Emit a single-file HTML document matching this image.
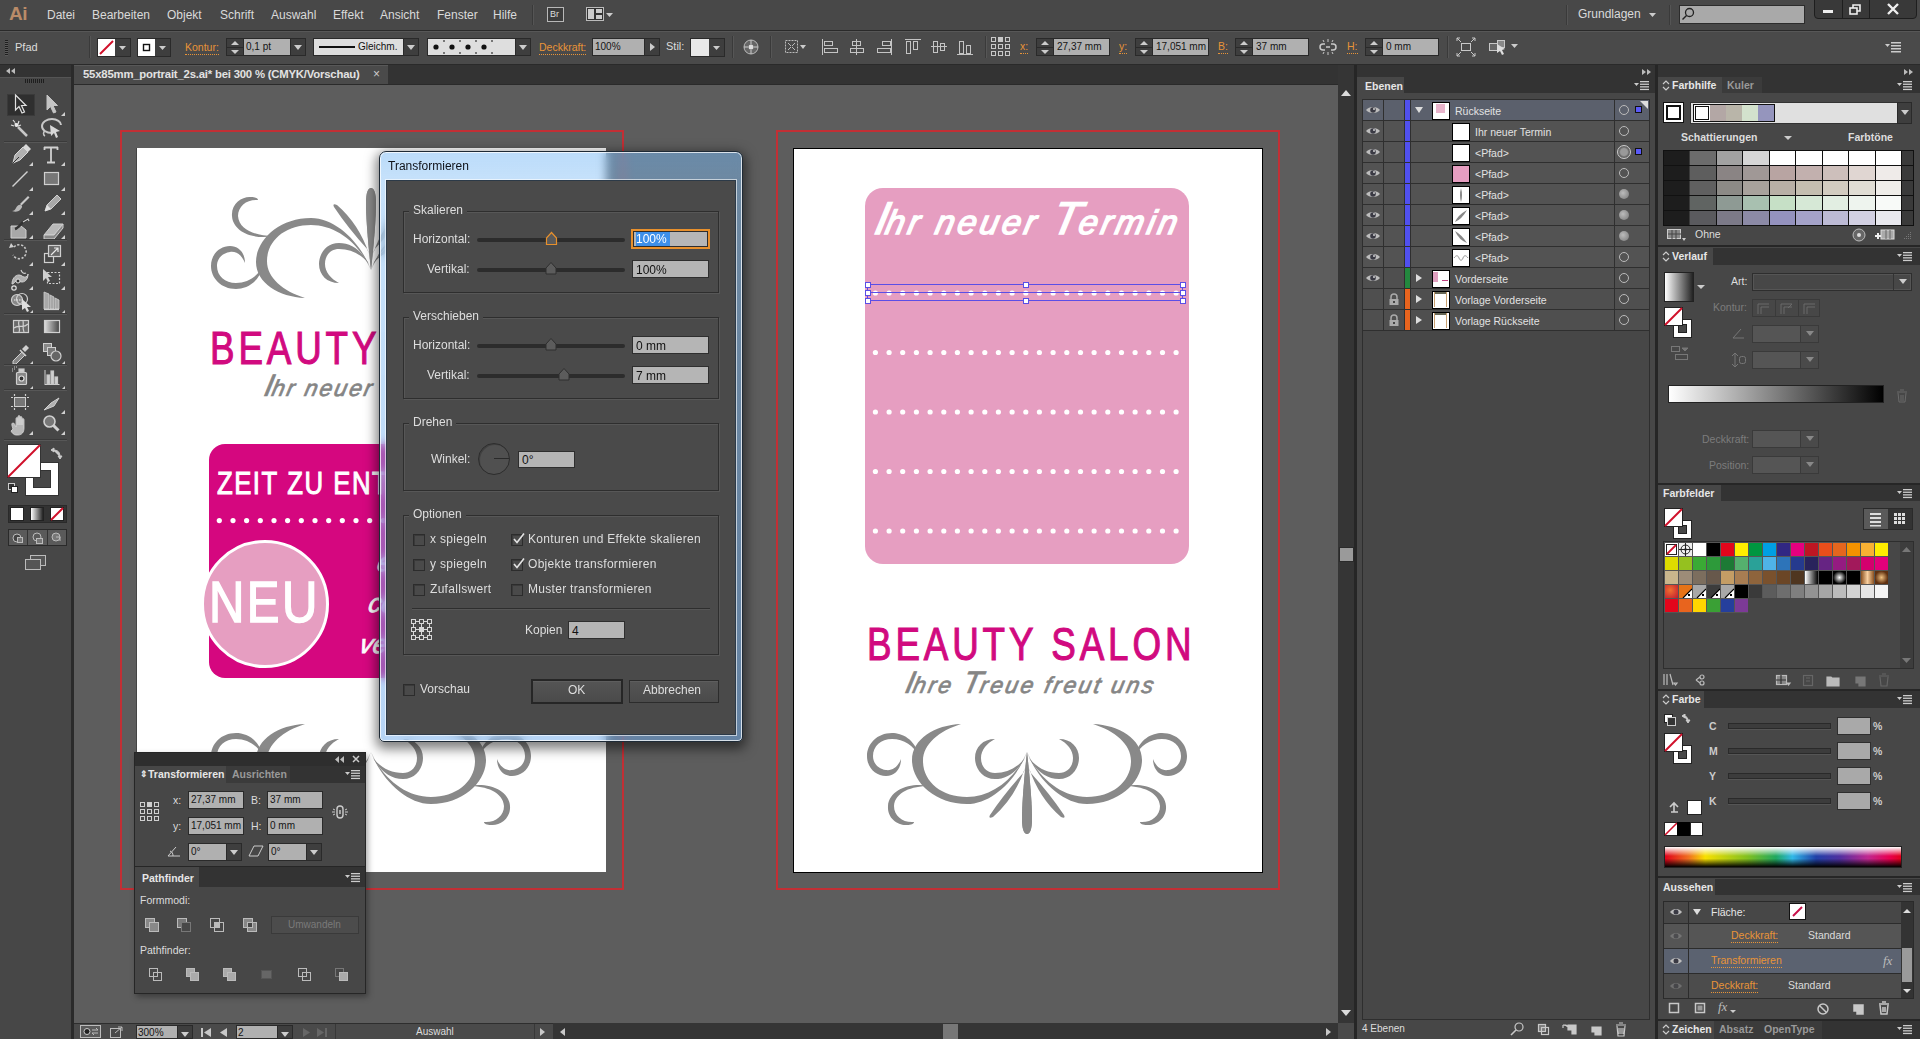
<!DOCTYPE html>
<html><head><meta charset="utf-8">
<style>
*{box-sizing:border-box;margin:0;padding:0}
html,body{width:1920px;height:1039px;overflow:hidden;background:#474747;font-family:"Liberation Sans",sans-serif;color:#d8d8d8;font-size:11px}
.a{position:absolute}
.t{position:absolute;white-space:nowrap;line-height:1}
.dl{font-size:12px;color:#dedede}
.trk{left:477px;width:148px;height:4px;background:#2c2c2c;border-radius:2px}
.inp{background:#b5b5b5;border:1px solid #2e2e2e}
.cb{width:12px;height:12px;background:#4a4a4a;border:1px solid #2c2c2c;box-shadow:inset 1px 1px 0 #3a3a3a}
.btn{background:linear-gradient(#555,#4a4a4a);border:1px solid #2c2c2c;box-shadow:inset 0 1px 0 #5e5e5e}
.mn{top:9px;font-size:12px;color:#dadada}
.sep{width:1px;height:22px;background:#3a3a3a;box-shadow:1px 0 0 #565656}
.or{font-size:10.5px;color:#e89438;border-bottom:1px dotted #e89438;padding-bottom:1px}
.spn{width:18px;height:18px;background:#3e3e3e;border:1px solid #2a2a2a;background-image:linear-gradient(#2a2a2a,#2a2a2a);background-size:100% 1px;background-position:0 8px;background-repeat:no-repeat}
.spn::before{content:"";position:absolute;left:4px;top:2px;border:4px solid transparent;border-bottom:4px solid #ccc;border-top:0}
.spn::after{content:"";position:absolute;left:4px;top:11px;border:4px solid transparent;border-top:4px solid #ccc;border-bottom:0}
.cinp{height:18px;background:#b0b0b0;border:1px solid #2a2a2a}
.ci{font-size:10px;color:#141414}
.ddb{width:16px;height:18px;background:#3e3e3e;border:1px solid #2a2a2a}
.ddb::after{content:"";position:absolute;left:3px;top:6px;border:4px solid transparent;border-top:5px solid #ccc;border-bottom:0}
.pt{font-size:10.5px;color:#e6e6e6;font-weight:bold}
.pl{font-size:10.5px;color:#dcdcdc}
.pinp{height:18px;background:#b0b0b0;border:1px solid #2a2a2a}
.ln{font-size:10.5px;color:#e2e2e2}
</style></head><body>
<!-- MENU BAR -->
<div class="a" style="left:0;top:0;width:1920px;height:30px;background:#484848"></div>
<div class="a" style="left:0;top:30px;width:1920px;height:1px;background:#2a2a2a"></div>
<!-- CONTROL BAR -->
<div class="a" style="left:0;top:31px;width:1920px;height:33px;background:#4a4a4a;border-top:1px solid #575757"></div>
<div class="a" style="left:0;top:64px;width:1920px;height:1px;background:#2a2a2a"></div>

<!-- MENU CONTENT -->
<div class="t" style="left:9px;top:4px;font-size:19px;font-weight:bold;color:#b98b68;letter-spacing:-0.5px">Ai</div>
<div class="t mn" style="left:47px">Datei</div>
<div class="t mn" style="left:92px">Bearbeiten</div>
<div class="t mn" style="left:167px">Objekt</div>
<div class="t mn" style="left:220px">Schrift</div>
<div class="t mn" style="left:271px">Auswahl</div>
<div class="t mn" style="left:333px">Effekt</div>
<div class="t mn" style="left:380px">Ansicht</div>
<div class="t mn" style="left:437px">Fenster</div>
<div class="t mn" style="left:493px">Hilfe</div>
<div class="a" style="left:532px;top:5px;width:1px;height:20px;background:#3a3a3a;box-shadow:1px 0 0 #555"></div>
<div class="a" style="left:547px;top:7px;width:17px;height:15px;border:1px solid #b8b8b8;background:#3c3c3c"></div>
<div class="t" style="left:550px;top:10px;font-size:9px;color:#ddd">Br</div>
<svg class="a" style="left:586px;top:7px" width="30" height="16"><rect x="0.5" y="0.5" width="17" height="13" fill="#333" stroke="#bbb"/><rect x="2" y="2" width="6" height="10" fill="#ccc"/><rect x="10" y="2" width="6" height="4" fill="#ccc"/><rect x="10" y="8" width="6" height="4" fill="#ccc"/><path d="M20 6h7l-3.5 4z" fill="#ccc"/></svg>
<div class="a" style="left:1566px;top:5px;width:1px;height:20px;background:#3a3a3a;box-shadow:1px 0 0 #555"></div>
<div class="t mn" style="left:1578px;top:8px">Grundlagen</div>
<svg class="a" style="left:1648px;top:12px" width="10" height="6"><path d="M1 1h7l-3.5 4z" fill="#ccc"/></svg>
<div class="a" style="left:1669px;top:5px;width:1px;height:20px;background:#3a3a3a;box-shadow:1px 0 0 #555"></div>
<div class="a" style="left:1679px;top:5px;width:126px;height:19px;background:#a9a9a9;border:1px solid #2c2c2c"></div>
<svg class="a" style="left:1680px;top:6px" width="16" height="16"><circle cx="9.5" cy="6.5" r="4" fill="none" stroke="#222" stroke-width="1.3"/><path d="M6.5 9.5 L2.5 13.5" stroke="#222" stroke-width="1.5"/></svg>
<div class="a" style="left:1814px;top:-1px;width:103px;height:20px;background:#393939;border:1px solid #1e1e1e;border-radius:0 0 4px 4px"></div>
<div class="a" style="left:1842px;top:0;width:1px;height:18px;background:#1e1e1e"></div>
<div class="a" style="left:1869px;top:0;width:1px;height:18px;background:#1e1e1e"></div>
<div class="a" style="left:1823px;top:10px;width:10px;height:3px;background:#eee"></div>
<svg class="a" style="left:1849px;top:3px" width="14" height="12" fill="none" stroke="#eee" stroke-width="1.6"><rect x="1" y="5" width="7" height="6"/><path d="M4 5V2h7v6H8"/></svg>
<svg class="a" style="left:1886px;top:3px" width="14" height="12" stroke="#eee" stroke-width="2.4"><path d="M2 1L12 11M12 1L2 11"/></svg>
<!-- CONTROL BAR CONTENT -->
<div class="a" style="left:5px;top:40px;width:3px;height:16px;background:repeating-linear-gradient(#1e1e1e 0 1px,#5a5a5a 1px 2px)"></div>
<div class="t" style="left:15px;top:42px;font-size:11px;color:#dcdcdc">Pfad</div>
<div class="a sep" style="left:89px;top:36px"></div>
<div class="a" style="left:97px;top:38px;width:34px;height:19px;background:#3e3e3e;border:1px solid #2a2a2a"></div>
<div class="a" style="left:98px;top:39px;width:17px;height:17px;background:#fff"></div>
<svg class="a" style="left:98px;top:39px" width="34" height="17"><path d="M2 15L15 2" stroke="#d0102a" stroke-width="2"/><path d="M21 7h7l-3.5 4z" fill="#ccc"/></svg>
<div class="a" style="left:137px;top:38px;width:34px;height:19px;background:#3e3e3e;border:1px solid #2a2a2a"></div>
<div class="a" style="left:138px;top:39px;width:17px;height:17px;background:#fff"></div>
<svg class="a" style="left:138px;top:39px" width="34" height="17"><rect x="5.5" y="5.5" width="6" height="6" fill="none" stroke="#111" stroke-width="1.4"/><path d="M21 7h7l-3.5 4z" fill="#ccc"/></svg>
<div class="t or" style="left:185px;top:42px">Kontur:</div>
<div class="a spn" style="left:226px;top:38px"></div>
<div class="a cinp" style="left:243px;top:38px;width:48px"></div>
<div class="t ci" style="left:246px;top:42px">0,1 pt</div>
<div class="a ddb" style="left:290px;top:38px"></div>
<div class="a" style="left:313px;top:38px;width:91px;height:18px;background:#dedede;border:1px solid #2a2a2a"></div>
<div class="a" style="left:319px;top:46px;width:36px;height:2px;background:#111"></div>
<div class="t" style="left:358px;top:42px;font-size:10px;color:#111">Gleichm.</div>
<div class="a ddb" style="left:403px;top:38px"></div>
<div class="a" style="left:427px;top:38px;width:89px;height:18px;background:#dedede;border:1px solid #2a2a2a"></div>
<svg class="a" style="left:427px;top:38px" width="89" height="18"><g fill="#111"><circle cx="9" cy="9" r="2.6"/><circle cx="25" cy="9" r="2.6"/><circle cx="41" cy="9" r="2.6"/><circle cx="57" cy="9" r="2.6"/></g><g stroke="#111"><path d="M17 2v2M17 14v2M33 2v2M33 14v2M49 2v2M49 14v2M65 2v2M65 14v2"/></g></svg>
<div class="a ddb" style="left:515px;top:38px"></div>
<div class="t or" style="left:539px;top:42px">Deckkraft:</div>
<div class="a cinp" style="left:592px;top:38px;width:53px"></div>
<div class="t ci" style="left:595px;top:42px">100%</div>
<div class="a" style="left:644px;top:38px;width:16px;height:18px;background:#3e3e3e;border:1px solid #2a2a2a"></div>
<svg class="a" style="left:644px;top:38px" width="16" height="18"><path d="M6 5v8l5-4z" fill="#ccc"/></svg>
<div class="t" style="left:666px;top:41px;font-size:11px;color:#dcdcdc">Stil:</div>
<div class="a" style="left:690px;top:38px;width:35px;height:19px;background:#3e3e3e;border:1px solid #2a2a2a"></div>
<div class="a" style="left:691px;top:39px;width:18px;height:17px;background:#e8e8e8"></div>
<svg class="a" style="left:709px;top:39px" width="16" height="17"><path d="M4 7h7l-3.5 4z" fill="#ccc"/></svg>
<div class="a sep" style="left:732px;top:36px"></div>
<svg class="a" style="left:742px;top:38px" width="18" height="18"><circle cx="9" cy="9" r="7" fill="#666" stroke="#bbb"/><circle cx="9" cy="9" r="2.5" fill="#ddd"/><path d="M9 2v4M9 12v4M2 9h4M12 9h4" stroke="#ccc"/></svg>
<div class="a sep" style="left:770px;top:36px"></div>
<svg class="a" style="left:782px;top:37px" width="26" height="20" fill="none" stroke="#bbb"><rect x="3.5" y="3.5" width="12" height="12" stroke-dasharray="2 1"/><path d="M6 6l3 3M13 6l-3 3M6 13l3-3M13 13l-3-3"/><path d="M18 8h6l-3 4z" fill="#ccc" stroke="none"/></svg>
<svg class="a" style="left:820px;top:37px" width="160" height="20" fill="none" stroke="#c4c4c4">
<path d="M2.5 2v16"/><rect x="4.5" y="4.5" width="8" height="4"/><rect x="4.5" y="11.5" width="13" height="4"/>
<path d="M36.5 2v16"/><rect x="32.5" y="4.5" width="8" height="4"/><rect x="30.5" y="11.5" width="13" height="4"/>
<path d="M71.5 2v16"/><rect x="62.5" y="4.5" width="8" height="4"/><rect x="57.5" y="11.5" width="13" height="4"/>
<path d="M85 2.5h16"/><rect x="86.5" y="4.5" width="4" height="12"/><rect x="93.5" y="4.5" width="4" height="8"/>
<path d="M111 9.5h16"/><rect x="113.5" y="4.5" width="4" height="11"/><rect x="120.5" y="6.5" width="4" height="7"/>
<path d="M137 17.5h16"/><rect x="139.5" y="4.5" width="4" height="12"/><rect x="146.5" y="8.5" width="4" height="8"/>
</svg>
<div class="a sep" style="left:985px;top:36px"></div>
<svg class="a" style="left:991px;top:37px" width="20" height="20" fill="none" stroke="#c8c8c8">
<rect x="0.5" y="0.5" width="4" height="4"/><rect x="7.5" y="0.5" width="4" height="4" fill="#c8c8c8"/><rect x="14.5" y="0.5" width="4" height="4"/>
<rect x="0.5" y="7.5" width="4" height="4"/><rect x="7.5" y="7.5" width="4" height="4"/><rect x="14.5" y="7.5" width="4" height="4"/>
<rect x="0.5" y="14.5" width="4" height="4"/><rect x="7.5" y="14.5" width="4" height="4"/><rect x="14.5" y="14.5" width="4" height="4"/>
</svg>
<div class="t or" style="left:1020px;top:41px">x:</div>
<div class="a spn" style="left:1036px;top:38px"></div>
<div class="a cinp" style="left:1053px;top:38px;width:57px"></div>
<div class="t ci" style="left:1057px;top:42px">27,37 mm</div>
<div class="t or" style="left:1119px;top:41px">y:</div>
<div class="a spn" style="left:1135px;top:38px"></div>
<div class="a cinp" style="left:1152px;top:38px;width:57px"></div>
<div class="t ci" style="left:1156px;top:42px">17,051 mm</div>
<div class="t or" style="left:1218px;top:41px">B:</div>
<div class="a spn" style="left:1235px;top:38px"></div>
<div class="a cinp" style="left:1252px;top:38px;width:57px"></div>
<div class="t ci" style="left:1256px;top:42px">37 mm</div>
<svg class="a" style="left:1319px;top:38px" width="18" height="18" fill="none" stroke="#c8c8c8" stroke-width="1.5"><path d="M6 6H4a3 3 0 0 0 0 6h2M12 6h2a3 3 0 0 1 0 6h-2M7 9h4"/><path d="M9 1v3M9 14v3M4 2l1 2M14 2l-1 2M4 16l1-2M14 16l-1-2" stroke-width="1"/></svg>
<div class="t or" style="left:1347px;top:41px">H:</div>
<div class="a spn" style="left:1365px;top:38px"></div>
<div class="a cinp" style="left:1382px;top:38px;width:57px"></div>
<div class="t ci" style="left:1386px;top:42px">0 mm</div>
<div class="a sep" style="left:1447px;top:36px"></div>
<svg class="a" style="left:1456px;top:37px" width="20" height="20" fill="none" stroke="#c8c8c8"><rect x="5.5" y="6.5" width="9" height="7"/><path d="M1 1l4 4M19 1l-4 4M1 19l4-4M19 19l-4-4M1 1h3M1 1v3M19 1h-3M19 1v3M1 19h3M1 19v-3M19 19h-3M19 19v-3"/></svg>
<svg class="a" style="left:1487px;top:37px" width="36" height="20"><rect x="2.5" y="6.5" width="8" height="7" fill="#666" stroke="#c8c8c8"/><rect x="10.5" y="3.5" width="7" height="7" fill="#888" stroke="#c8c8c8"/><path d="M10 7l8 5-3 1 2 4-2 1-2-4-3 2z" fill="#ddd"/><path d="M24 7h7l-3.5 4z" fill="#ccc"/></svg>
<svg class="a" style="left:1885px;top:40px" width="20" height="14" fill="#ccc"><path d="M0 4h5l-2.5 3z"/><rect x="6" y="2" width="10" height="1.5"/><rect x="6" y="5" width="10" height="1.5"/><rect x="6" y="8" width="10" height="1.5"/><rect x="6" y="11" width="10" height="1.5"/></svg>

<!-- TOOLBAR -->
<div class="a" style="left:0;top:65px;width:71px;height:12px;background:#333"></div>
<div class="a" style="left:0;top:77px;width:71px;height:962px;background:#474747;border-top:1px solid #555"></div>
<div class="a" style="left:71px;top:65px;width:3px;height:974px;background:#2a2a2a"></div>
<!-- DOC TAB BAR -->
<div class="a" style="left:74px;top:65px;width:1264px;height:20px;background:#333"></div>
<div class="a" style="left:74px;top:65px;width:314px;height:20px;background:#4a4a4a;border-top:1px solid #585858"></div>
<div class="a" style="left:74px;top:84px;width:1264px;height:1px;background:#2a2a2a"></div>
<!-- CANVAS -->
<div id="canvas" class="a" style="left:74px;top:85px;width:1264px;height:938px;background:#5d5d5d;overflow:hidden"></div>

<!-- ARTBOARDS -->
<div class="a" style="left:120px;top:130px;width:504px;height:760px;border:2px solid #c22f35"></div>
<div class="a" style="left:776px;top:130px;width:504px;height:760px;border:2px solid #c22f35"></div>
<div class="a" style="left:136px;top:148px;width:470px;height:724px;background:#fff;border-left:1px solid #444"></div>
<div class="a" style="left:793px;top:148px;width:470px;height:725px;background:#fff;border:1px solid #000"></div>
<svg class="a" style="left:0;top:0" width="1338" height="1023" viewBox="0 0 1338 1023">
<defs>
<g id="ornh" fill="#898989">
<path d="M160 82 C150 55 125 30 100 30 C68 30 45 52 45 74 C45 95 68 109 94 110 C72 103 56 90 56 73 C56 52 75 37 100 37 C125 37 148 55 160 82Z"/>
<path d="M62 48 C45 52 22 45 21 28 C20 15 32 8 40 9 C44 9 47 10 47 12 C36 11 27 18 27 28 C28 42 45 48 62 48Z"/>
<path d="M52 78 C48 95 35 101 25 101 C10 101 0 90 0 78 C0 66 9 58 19 58 C28 58 34 65 34 75 C31 67 25 63 19 64 C11 65 6 71 6 78 C6 88 14 95 25 95 C37 95 47 88 52 78Z"/>
<path d="M158 76 C150 62 140 55 128 55 C115 55 108 66 108 76 C108 87 116 95 128 95 C120 91 114 84 114 76 C114 67 120 61 128 61 C140 61 150 66 158 76Z"/>
</g>
<g id="leafh" fill="#898989">
<path d="M157 62 Q137 40 123 19 Q121 15 126 17 Q148 36 158 66Z"/>
<path d="M160 82 C157 55 155 30 155 15 C155 5 157 0 160 0 C163 0 165 5 165 15 C165 30 163 55 160 82Z"/>
</g>
<g id="ornbase"><use href="#ornh"/><use href="#ornh" transform="translate(320,0) scale(-1,1)"/></g>
<g id="orn"><use href="#ornbase"/><use href="#leafh"/><use href="#leafh" transform="translate(320,0) scale(-1,1)"/></g>
</defs>
<use href="#orn" transform="translate(211,188)"/>
<use href="#ornbase" transform="translate(211,834) scale(1,-1)"/>
<use href="#orn" transform="translate(867,834) scale(1,-1)"/>
<!-- right pink box -->
<rect x="865" y="188" width="324" height="376" rx="18" fill="#e69ec1"/>
<g fill="#fff">
<circle cx="875.4" cy="293.0" r="2.6"/>
<circle cx="889.1" cy="293.0" r="2.6"/>
<circle cx="902.7" cy="293.0" r="2.6"/>
<circle cx="916.4" cy="293.0" r="2.6"/>
<circle cx="930.1" cy="293.0" r="2.6"/>
<circle cx="943.8" cy="293.0" r="2.6"/>
<circle cx="957.4" cy="293.0" r="2.6"/>
<circle cx="971.1" cy="293.0" r="2.6"/>
<circle cx="984.8" cy="293.0" r="2.6"/>
<circle cx="998.4" cy="293.0" r="2.6"/>
<circle cx="1012.1" cy="293.0" r="2.6"/>
<circle cx="1025.8" cy="293.0" r="2.6"/>
<circle cx="1039.4" cy="293.0" r="2.6"/>
<circle cx="1053.1" cy="293.0" r="2.6"/>
<circle cx="1066.8" cy="293.0" r="2.6"/>
<circle cx="1080.5" cy="293.0" r="2.6"/>
<circle cx="1094.1" cy="293.0" r="2.6"/>
<circle cx="1107.8" cy="293.0" r="2.6"/>
<circle cx="1121.5" cy="293.0" r="2.6"/>
<circle cx="1135.1" cy="293.0" r="2.6"/>
<circle cx="1148.8" cy="293.0" r="2.6"/>
<circle cx="1162.5" cy="293.0" r="2.6"/>
<circle cx="1176.1" cy="293.0" r="2.6"/>
<circle cx="875.4" cy="352.5" r="2.6"/>
<circle cx="889.1" cy="352.5" r="2.6"/>
<circle cx="902.7" cy="352.5" r="2.6"/>
<circle cx="916.4" cy="352.5" r="2.6"/>
<circle cx="930.1" cy="352.5" r="2.6"/>
<circle cx="943.8" cy="352.5" r="2.6"/>
<circle cx="957.4" cy="352.5" r="2.6"/>
<circle cx="971.1" cy="352.5" r="2.6"/>
<circle cx="984.8" cy="352.5" r="2.6"/>
<circle cx="998.4" cy="352.5" r="2.6"/>
<circle cx="1012.1" cy="352.5" r="2.6"/>
<circle cx="1025.8" cy="352.5" r="2.6"/>
<circle cx="1039.4" cy="352.5" r="2.6"/>
<circle cx="1053.1" cy="352.5" r="2.6"/>
<circle cx="1066.8" cy="352.5" r="2.6"/>
<circle cx="1080.5" cy="352.5" r="2.6"/>
<circle cx="1094.1" cy="352.5" r="2.6"/>
<circle cx="1107.8" cy="352.5" r="2.6"/>
<circle cx="1121.5" cy="352.5" r="2.6"/>
<circle cx="1135.1" cy="352.5" r="2.6"/>
<circle cx="1148.8" cy="352.5" r="2.6"/>
<circle cx="1162.5" cy="352.5" r="2.6"/>
<circle cx="1176.1" cy="352.5" r="2.6"/>
<circle cx="875.4" cy="412.0" r="2.6"/>
<circle cx="889.1" cy="412.0" r="2.6"/>
<circle cx="902.7" cy="412.0" r="2.6"/>
<circle cx="916.4" cy="412.0" r="2.6"/>
<circle cx="930.1" cy="412.0" r="2.6"/>
<circle cx="943.8" cy="412.0" r="2.6"/>
<circle cx="957.4" cy="412.0" r="2.6"/>
<circle cx="971.1" cy="412.0" r="2.6"/>
<circle cx="984.8" cy="412.0" r="2.6"/>
<circle cx="998.4" cy="412.0" r="2.6"/>
<circle cx="1012.1" cy="412.0" r="2.6"/>
<circle cx="1025.8" cy="412.0" r="2.6"/>
<circle cx="1039.4" cy="412.0" r="2.6"/>
<circle cx="1053.1" cy="412.0" r="2.6"/>
<circle cx="1066.8" cy="412.0" r="2.6"/>
<circle cx="1080.5" cy="412.0" r="2.6"/>
<circle cx="1094.1" cy="412.0" r="2.6"/>
<circle cx="1107.8" cy="412.0" r="2.6"/>
<circle cx="1121.5" cy="412.0" r="2.6"/>
<circle cx="1135.1" cy="412.0" r="2.6"/>
<circle cx="1148.8" cy="412.0" r="2.6"/>
<circle cx="1162.5" cy="412.0" r="2.6"/>
<circle cx="1176.1" cy="412.0" r="2.6"/>
<circle cx="875.4" cy="471.5" r="2.6"/>
<circle cx="889.1" cy="471.5" r="2.6"/>
<circle cx="902.7" cy="471.5" r="2.6"/>
<circle cx="916.4" cy="471.5" r="2.6"/>
<circle cx="930.1" cy="471.5" r="2.6"/>
<circle cx="943.8" cy="471.5" r="2.6"/>
<circle cx="957.4" cy="471.5" r="2.6"/>
<circle cx="971.1" cy="471.5" r="2.6"/>
<circle cx="984.8" cy="471.5" r="2.6"/>
<circle cx="998.4" cy="471.5" r="2.6"/>
<circle cx="1012.1" cy="471.5" r="2.6"/>
<circle cx="1025.8" cy="471.5" r="2.6"/>
<circle cx="1039.4" cy="471.5" r="2.6"/>
<circle cx="1053.1" cy="471.5" r="2.6"/>
<circle cx="1066.8" cy="471.5" r="2.6"/>
<circle cx="1080.5" cy="471.5" r="2.6"/>
<circle cx="1094.1" cy="471.5" r="2.6"/>
<circle cx="1107.8" cy="471.5" r="2.6"/>
<circle cx="1121.5" cy="471.5" r="2.6"/>
<circle cx="1135.1" cy="471.5" r="2.6"/>
<circle cx="1148.8" cy="471.5" r="2.6"/>
<circle cx="1162.5" cy="471.5" r="2.6"/>
<circle cx="1176.1" cy="471.5" r="2.6"/>
<circle cx="875.4" cy="531.0" r="2.6"/>
<circle cx="889.1" cy="531.0" r="2.6"/>
<circle cx="902.7" cy="531.0" r="2.6"/>
<circle cx="916.4" cy="531.0" r="2.6"/>
<circle cx="930.1" cy="531.0" r="2.6"/>
<circle cx="943.8" cy="531.0" r="2.6"/>
<circle cx="957.4" cy="531.0" r="2.6"/>
<circle cx="971.1" cy="531.0" r="2.6"/>
<circle cx="984.8" cy="531.0" r="2.6"/>
<circle cx="998.4" cy="531.0" r="2.6"/>
<circle cx="1012.1" cy="531.0" r="2.6"/>
<circle cx="1025.8" cy="531.0" r="2.6"/>
<circle cx="1039.4" cy="531.0" r="2.6"/>
<circle cx="1053.1" cy="531.0" r="2.6"/>
<circle cx="1066.8" cy="531.0" r="2.6"/>
<circle cx="1080.5" cy="531.0" r="2.6"/>
<circle cx="1094.1" cy="531.0" r="2.6"/>
<circle cx="1107.8" cy="531.0" r="2.6"/>
<circle cx="1121.5" cy="531.0" r="2.6"/>
<circle cx="1135.1" cy="531.0" r="2.6"/>
<circle cx="1148.8" cy="531.0" r="2.6"/>
<circle cx="1162.5" cy="531.0" r="2.6"/>
<circle cx="1176.1" cy="531.0" r="2.6"/>
</g>
<!-- selection -->
<g stroke="#5b4ee6" stroke-width="1" fill="none">
<rect x="867.5" y="284.5" width="315" height="16"/>
<line x1="867.5" y1="292.5" x2="1182.5" y2="292.5"/>
</g>
<g fill="#fff" stroke="#5b4ee6" stroke-width="1">
<rect x="865.5" y="282.5" width="5" height="5"/><rect x="1023.5" y="282.5" width="5" height="5"/><rect x="1180.5" y="282.5" width="5" height="5"/>
<rect x="865.5" y="290.5" width="5" height="5"/><rect x="1180.5" y="290.5" width="5" height="5"/>
<rect x="865.5" y="298.5" width="5" height="5"/><rect x="1023.5" y="298.5" width="5" height="5"/><rect x="1180.5" y="298.5" width="5" height="5"/>
</g>
<!-- left magenta box -->
<rect x="209" y="444" width="400" height="234" rx="16" fill="#d5077f"/>
<g fill="#fff">
<circle cx="219.3" cy="520.6" r="2.6"/>
<circle cx="233.0" cy="520.6" r="2.6"/>
<circle cx="246.6" cy="520.6" r="2.6"/>
<circle cx="260.3" cy="520.6" r="2.6"/>
<circle cx="274.0" cy="520.6" r="2.6"/>
<circle cx="287.6" cy="520.6" r="2.6"/>
<circle cx="301.3" cy="520.6" r="2.6"/>
<circle cx="315.0" cy="520.6" r="2.6"/>
<circle cx="328.7" cy="520.6" r="2.6"/>
<circle cx="342.3" cy="520.6" r="2.6"/>
<circle cx="356.0" cy="520.6" r="2.6"/>
<circle cx="369.7" cy="520.6" r="2.6"/>
<circle cx="383.3" cy="520.6" r="2.6"/>
<circle cx="397.0" cy="520.6" r="2.6"/>
<circle cx="410.7" cy="520.6" r="2.6"/>
<circle cx="424.4" cy="520.6" r="2.6"/>
<circle cx="438.0" cy="520.6" r="2.6"/>
<circle cx="451.7" cy="520.6" r="2.6"/>
<circle cx="465.4" cy="520.6" r="2.6"/>
<circle cx="479.0" cy="520.6" r="2.6"/>
<circle cx="492.7" cy="520.6" r="2.6"/>
<circle cx="506.4" cy="520.6" r="2.6"/>
<circle cx="520.0" cy="520.6" r="2.6"/>
<circle cx="533.7" cy="520.6" r="2.6"/>
<circle cx="547.4" cy="520.6" r="2.6"/>
<circle cx="561.0" cy="520.6" r="2.6"/>
<circle cx="574.7" cy="520.6" r="2.6"/>
<circle cx="588.4" cy="520.6" r="2.6"/>
<circle cx="602.1" cy="520.6" r="2.6"/>
<circle cx="615.7" cy="520.6" r="2.6"/>
</g>
<circle cx="265" cy="604" r="62.5" fill="#e69ec1" stroke="#fff" stroke-width="3"/>
</svg>
<div class="t" style="left:867px;top:621px;font-size:46px;color:#d10a7f;-webkit-text-stroke:1.1px #d10a7f;letter-spacing:4.8px;transform:scaleX(0.8);transform-origin:0 0">BEAUTY&nbsp;SALON</div>
<div class="t" style="left:210px;top:325px;font-size:46px;color:#d10a7f;-webkit-text-stroke:1.1px #d10a7f;letter-spacing:4.8px;transform:scaleX(0.8);transform-origin:0 0">BEAUTY</div>
<div class="t" style="left:872px;top:196px;font-size:34px;color:#fff;font-style:italic;-webkit-text-stroke:1.4px #fff;letter-spacing:3.3px;transform:skewX(-12deg);transform-origin:0 100%;line-height:44px;height:44px"><span style="font-size:46px;letter-spacing:-2px">I</span>hr neuer <span style="font-size:46px;letter-spacing:-1px">T</span>ermin</div>
<div class="t" style="left:903px;top:668px;font-size:23px;color:#858585;font-style:italic;-webkit-text-stroke:0.7px #858585;letter-spacing:2.4px;transform:skewX(-12deg);transform-origin:0 100%;line-height:30px;height:30px"><span style="font-size:31px;letter-spacing:-1px">I</span>hre <span style="font-size:31px;letter-spacing:-1px">T</span>reue freut uns</div>
<div class="t" style="left:262px;top:371px;font-size:23px;color:#858585;font-style:italic;-webkit-text-stroke:0.7px #858585;letter-spacing:2px;transform:skewX(-12deg);transform-origin:0 100%;line-height:30px;height:30px"><span style="font-size:31px;letter-spacing:-1px">I</span>hr neuer</div>
<div class="t" style="left:217px;top:468px;font-size:31px;color:#fff;-webkit-text-stroke:1px #fff;letter-spacing:1.8px;transform:scaleX(0.83);transform-origin:0 0">ZEIT&nbsp;ZU&nbsp;ENTSPANNEN</div>
<div class="t" style="left:369px;top:542px;font-size:26px;line-height:41px;color:#fff;font-style:italic;-webkit-text-stroke:0.8px #fff;transform:skewX(-12deg);transform-origin:0 50%;white-space:pre">ee
ce
ve</div>
<div class="t" style="left:209px;top:574px;font-size:57px;color:#fff;-webkit-text-stroke:1.5px #fff;letter-spacing:2.8px;transform:scaleX(0.86);transform-origin:0 0">NEU</div>

<!-- V SCROLL -->
<div class="a" style="left:1338px;top:65px;width:16px;height:958px;background:#353535"></div>
<div class="a" style="left:1354px;top:65px;width:3px;height:974px;background:#262626"></div>
<!-- STATUS BAR -->
<div class="a" style="left:74px;top:1023px;width:479px;height:16px;background:#4a4a4a;border-top:1px solid #2e2e2e"></div>
<div class="a" style="left:553px;top:1023px;width:785px;height:16px;background:#353535"></div>
<div class="a" style="left:1338px;top:1023px;width:16px;height:16px;background:#4a4a4a"></div>
<!-- LAYERS PANEL -->
<div class="a" style="left:1357px;top:65px;width:298px;height:12px;background:#333"></div>
<div class="a" style="left:1357px;top:77px;width:298px;height:16px;background:#333"></div>
<div class="a" style="left:1357px;top:93px;width:298px;height:946px;background:#474747"></div>
<div class="a" style="left:1655px;top:65px;width:3px;height:974px;background:#262626"></div>
<div class="a" style="left:1357px;top:77px;width:47px;height:16px;background:#474747"></div>
<div class="t pt" style="left:1365px;top:81px">Ebenen</div>
<svg class="a" style="left:1641px;top:68px" width="12" height="8" fill="#bbb"><path d="M1 1v6l4-3zM6 1v6l4-3z"/></svg>
<svg class="a" style="left:1634px;top:80px" width="16" height="11" fill="#ccc"><path d="M0 3h5l-2.5 3z"/><rect x="6" y="1" width="9" height="1.3"/><rect x="6" y="3.6" width="9" height="1.3"/><rect x="6" y="6.2" width="9" height="1.3"/><rect x="6" y="8.8" width="9" height="1.3"/></svg>
<div class="a" style="left:1362px;top:99px;width:288px;height:921px;border:1px solid #2e2e2e;background:#474747"></div>
<div class="a" style="left:1363px;top:100px;width:286px;height:20px;background:#5b606c"></div>
<div class="a" style="left:1363px;top:120px;width:286px;height:1px;background:#2f2f2f"></div>
<div class="a" style="left:1383px;top:100px;width:1px;height:20px;background:#2f2f2f"></div>
<div class="a" style="left:1404px;top:100px;width:1px;height:20px;background:#2f2f2f"></div>
<div class="a" style="left:1405px;top:100px;width:5px;height:20px;background:#5050ee"></div>
<div class="a" style="left:1410px;top:100px;width:1px;height:20px;background:#2f2f2f"></div>
<div class="a" style="left:1614px;top:100px;width:1px;height:20px;background:#2f2f2f"></div>
<svg class="a" style="left:1365px;top:105px" width="16" height="10"><path d="M1 5C4 1 12 1 15 5C12 9 4 9 1 5Z" fill="#bdbdbd"/><circle cx="8" cy="5" r="2.8" fill="#3a3a44"/><circle cx="9" cy="4" r="0.9" fill="#ddd"/></svg>
<svg class="a" style="left:1414px;top:106px" width="10" height="8"><path d="M1 1h8l-4 6z" fill="#ddd"/></svg>
<div class="a" style="left:1432px;top:102px;width:18px;height:18px;background:#fff;border:1px solid #000"></div>
<div class="a" style="left:1436px;top:104px;width:9px;height:9px;background:#e8b4cc"></div>
<div class="t ln" style="left:1455px;top:106px">Rückseite</div>
<div class="a" style="left:1619px;top:105px;width:10px;height:10px;border-radius:50%;border:1px solid #bbb"></div>
<div class="a" style="left:1635px;top:106px;width:7px;height:7px;background:#5a5af8;border:1px solid #111"></div>
<div class="a" style="left:1363px;top:121px;width:286px;height:20px;background:#535353"></div>
<div class="a" style="left:1363px;top:141px;width:286px;height:1px;background:#2f2f2f"></div>
<div class="a" style="left:1383px;top:121px;width:1px;height:20px;background:#2f2f2f"></div>
<div class="a" style="left:1404px;top:121px;width:1px;height:20px;background:#2f2f2f"></div>
<div class="a" style="left:1405px;top:121px;width:5px;height:20px;background:#5050ee"></div>
<div class="a" style="left:1410px;top:121px;width:1px;height:20px;background:#2f2f2f"></div>
<div class="a" style="left:1614px;top:121px;width:1px;height:20px;background:#2f2f2f"></div>
<svg class="a" style="left:1365px;top:126px" width="16" height="10"><path d="M1 5C4 1 12 1 15 5C12 9 4 9 1 5Z" fill="#bdbdbd"/><circle cx="8" cy="5" r="2.8" fill="#3a3a44"/><circle cx="9" cy="4" r="0.9" fill="#ddd"/></svg>
<div class="a" style="left:1452px;top:123px;width:18px;height:18px;background:#fff;border:1px solid #000"></div>
<div class="t ln" style="left:1475px;top:127px">Ihr neuer Termin</div>
<div class="a" style="left:1619px;top:126px;width:10px;height:10px;border-radius:50%;border:1px solid #bbb"></div>
<div class="a" style="left:1363px;top:142px;width:286px;height:20px;background:#535353"></div>
<div class="a" style="left:1363px;top:162px;width:286px;height:1px;background:#2f2f2f"></div>
<div class="a" style="left:1383px;top:142px;width:1px;height:20px;background:#2f2f2f"></div>
<div class="a" style="left:1404px;top:142px;width:1px;height:20px;background:#2f2f2f"></div>
<div class="a" style="left:1405px;top:142px;width:5px;height:20px;background:#5050ee"></div>
<div class="a" style="left:1410px;top:142px;width:1px;height:20px;background:#2f2f2f"></div>
<div class="a" style="left:1614px;top:142px;width:1px;height:20px;background:#2f2f2f"></div>
<svg class="a" style="left:1365px;top:147px" width="16" height="10"><path d="M1 5C4 1 12 1 15 5C12 9 4 9 1 5Z" fill="#bdbdbd"/><circle cx="8" cy="5" r="2.8" fill="#3a3a44"/><circle cx="9" cy="4" r="0.9" fill="#ddd"/></svg>
<div class="a" style="left:1452px;top:144px;width:18px;height:18px;background:#fff;border:1px solid #000"></div>
<div class="t ln" style="left:1475px;top:148px">&lt;Pfad&gt;</div>
<div class="a" style="left:1617px;top:145px;width:14px;height:14px;border-radius:50%;border:1px solid #ccc;background:radial-gradient(#999 40%,#666 60%)"></div>
<div class="a" style="left:1635px;top:148px;width:7px;height:7px;background:#5a5af8;border:1px solid #111"></div>
<div class="a" style="left:1363px;top:163px;width:286px;height:20px;background:#535353"></div>
<div class="a" style="left:1363px;top:183px;width:286px;height:1px;background:#2f2f2f"></div>
<div class="a" style="left:1383px;top:163px;width:1px;height:20px;background:#2f2f2f"></div>
<div class="a" style="left:1404px;top:163px;width:1px;height:20px;background:#2f2f2f"></div>
<div class="a" style="left:1405px;top:163px;width:5px;height:20px;background:#5050ee"></div>
<div class="a" style="left:1410px;top:163px;width:1px;height:20px;background:#2f2f2f"></div>
<div class="a" style="left:1614px;top:163px;width:1px;height:20px;background:#2f2f2f"></div>
<svg class="a" style="left:1365px;top:168px" width="16" height="10"><path d="M1 5C4 1 12 1 15 5C12 9 4 9 1 5Z" fill="#bdbdbd"/><circle cx="8" cy="5" r="2.8" fill="#3a3a44"/><circle cx="9" cy="4" r="0.9" fill="#ddd"/></svg>
<div class="a" style="left:1452px;top:165px;width:18px;height:18px;background:#fff;border:1px solid #000"></div>
<div class="a" style="left:1453px;top:166px;width:16px;height:16px;background:#e69ec1"></div>
<div class="t ln" style="left:1475px;top:169px">&lt;Pfad&gt;</div>
<div class="a" style="left:1619px;top:168px;width:10px;height:10px;border-radius:50%;border:1px solid #bbb"></div>
<div class="a" style="left:1363px;top:184px;width:286px;height:20px;background:#535353"></div>
<div class="a" style="left:1363px;top:204px;width:286px;height:1px;background:#2f2f2f"></div>
<div class="a" style="left:1383px;top:184px;width:1px;height:20px;background:#2f2f2f"></div>
<div class="a" style="left:1404px;top:184px;width:1px;height:20px;background:#2f2f2f"></div>
<div class="a" style="left:1405px;top:184px;width:5px;height:20px;background:#5050ee"></div>
<div class="a" style="left:1410px;top:184px;width:1px;height:20px;background:#2f2f2f"></div>
<div class="a" style="left:1614px;top:184px;width:1px;height:20px;background:#2f2f2f"></div>
<svg class="a" style="left:1365px;top:189px" width="16" height="10"><path d="M1 5C4 1 12 1 15 5C12 9 4 9 1 5Z" fill="#bdbdbd"/><circle cx="8" cy="5" r="2.8" fill="#3a3a44"/><circle cx="9" cy="4" r="0.9" fill="#ddd"/></svg>
<div class="a" style="left:1452px;top:186px;width:18px;height:18px;background:#fff;border:1px solid #000"></div>
<svg class="a" style="left:1452px;top:186px" width="18" height="18"><path d="M9 2 Q7 9 9 16 Q11 9 9 2Z" fill="#888"/></svg>
<div class="t ln" style="left:1475px;top:190px">&lt;Pfad&gt;</div>
<div class="a" style="left:1619px;top:189px;width:10px;height:10px;border-radius:50%;background:radial-gradient(circle at 40% 40%,#bbb,#777)"></div>
<div class="a" style="left:1363px;top:205px;width:286px;height:20px;background:#535353"></div>
<div class="a" style="left:1363px;top:225px;width:286px;height:1px;background:#2f2f2f"></div>
<div class="a" style="left:1383px;top:205px;width:1px;height:20px;background:#2f2f2f"></div>
<div class="a" style="left:1404px;top:205px;width:1px;height:20px;background:#2f2f2f"></div>
<div class="a" style="left:1405px;top:205px;width:5px;height:20px;background:#5050ee"></div>
<div class="a" style="left:1410px;top:205px;width:1px;height:20px;background:#2f2f2f"></div>
<div class="a" style="left:1614px;top:205px;width:1px;height:20px;background:#2f2f2f"></div>
<svg class="a" style="left:1365px;top:210px" width="16" height="10"><path d="M1 5C4 1 12 1 15 5C12 9 4 9 1 5Z" fill="#bdbdbd"/><circle cx="8" cy="5" r="2.8" fill="#3a3a44"/><circle cx="9" cy="4" r="0.9" fill="#ddd"/></svg>
<div class="a" style="left:1452px;top:207px;width:18px;height:18px;background:#fff;border:1px solid #000"></div>
<svg class="a" style="left:1452px;top:207px" width="18" height="18"><path d="M15 3 Q6 8 3 15 Q10 12 15 3Z" fill="#888"/></svg>
<div class="t ln" style="left:1475px;top:211px">&lt;Pfad&gt;</div>
<div class="a" style="left:1619px;top:210px;width:10px;height:10px;border-radius:50%;background:radial-gradient(circle at 40% 40%,#bbb,#777)"></div>
<div class="a" style="left:1363px;top:226px;width:286px;height:20px;background:#535353"></div>
<div class="a" style="left:1363px;top:246px;width:286px;height:1px;background:#2f2f2f"></div>
<div class="a" style="left:1383px;top:226px;width:1px;height:20px;background:#2f2f2f"></div>
<div class="a" style="left:1404px;top:226px;width:1px;height:20px;background:#2f2f2f"></div>
<div class="a" style="left:1405px;top:226px;width:5px;height:20px;background:#5050ee"></div>
<div class="a" style="left:1410px;top:226px;width:1px;height:20px;background:#2f2f2f"></div>
<div class="a" style="left:1614px;top:226px;width:1px;height:20px;background:#2f2f2f"></div>
<svg class="a" style="left:1365px;top:231px" width="16" height="10"><path d="M1 5C4 1 12 1 15 5C12 9 4 9 1 5Z" fill="#bdbdbd"/><circle cx="8" cy="5" r="2.8" fill="#3a3a44"/><circle cx="9" cy="4" r="0.9" fill="#ddd"/></svg>
<div class="a" style="left:1452px;top:228px;width:18px;height:18px;background:#fff;border:1px solid #000"></div>
<svg class="a" style="left:1452px;top:228px" width="18" height="18"><path d="M3 3 Q7 12 15 15 Q10 7 3 3Z" fill="#888"/></svg>
<div class="t ln" style="left:1475px;top:232px">&lt;Pfad&gt;</div>
<div class="a" style="left:1619px;top:231px;width:10px;height:10px;border-radius:50%;background:radial-gradient(circle at 40% 40%,#bbb,#777)"></div>
<div class="a" style="left:1363px;top:247px;width:286px;height:20px;background:#535353"></div>
<div class="a" style="left:1363px;top:267px;width:286px;height:1px;background:#2f2f2f"></div>
<div class="a" style="left:1383px;top:247px;width:1px;height:20px;background:#2f2f2f"></div>
<div class="a" style="left:1404px;top:247px;width:1px;height:20px;background:#2f2f2f"></div>
<div class="a" style="left:1405px;top:247px;width:5px;height:20px;background:#5050ee"></div>
<div class="a" style="left:1410px;top:247px;width:1px;height:20px;background:#2f2f2f"></div>
<div class="a" style="left:1614px;top:247px;width:1px;height:20px;background:#2f2f2f"></div>
<svg class="a" style="left:1365px;top:252px" width="16" height="10"><path d="M1 5C4 1 12 1 15 5C12 9 4 9 1 5Z" fill="#bdbdbd"/><circle cx="8" cy="5" r="2.8" fill="#3a3a44"/><circle cx="9" cy="4" r="0.9" fill="#ddd"/></svg>
<div class="a" style="left:1452px;top:249px;width:18px;height:18px;background:#fff;border:1px solid #000"></div>
<svg class="a" style="left:1452px;top:249px" width="18" height="18"><path d="M2 9c2-3 4-3 5 0s3 3 4 0 3-3 5 0" fill="none" stroke="#999" stroke-width="1"/></svg>
<div class="t ln" style="left:1475px;top:253px">&lt;Pfad&gt;</div>
<div class="a" style="left:1619px;top:252px;width:10px;height:10px;border-radius:50%;border:1px solid #bbb"></div>
<div class="a" style="left:1363px;top:268px;width:286px;height:20px;background:#4f4f4f"></div>
<div class="a" style="left:1363px;top:288px;width:286px;height:1px;background:#2f2f2f"></div>
<div class="a" style="left:1383px;top:268px;width:1px;height:20px;background:#2f2f2f"></div>
<div class="a" style="left:1404px;top:268px;width:1px;height:20px;background:#2f2f2f"></div>
<div class="a" style="left:1405px;top:268px;width:5px;height:20px;background:#23883e"></div>
<div class="a" style="left:1410px;top:268px;width:1px;height:20px;background:#2f2f2f"></div>
<div class="a" style="left:1614px;top:268px;width:1px;height:20px;background:#2f2f2f"></div>
<svg class="a" style="left:1365px;top:273px" width="16" height="10"><path d="M1 5C4 1 12 1 15 5C12 9 4 9 1 5Z" fill="#bdbdbd"/><circle cx="8" cy="5" r="2.8" fill="#3a3a44"/><circle cx="9" cy="4" r="0.9" fill="#ddd"/></svg>
<svg class="a" style="left:1415px;top:273px" width="8" height="10"><path d="M1 1v8l6-4z" fill="#ddd"/></svg>
<div class="a" style="left:1432px;top:270px;width:18px;height:18px;background:#fff;border:1px solid #000"></div>
<div class="a" style="left:1433px;top:272px;width:5px;height:10px;background:#e0a0c0"></div><div class="a" style="left:1442px;top:280px;width:6px;height:1px;background:#c04080"></div>
<div class="t ln" style="left:1455px;top:274px">Vorderseite</div>
<div class="a" style="left:1619px;top:273px;width:10px;height:10px;border-radius:50%;border:1px solid #bbb"></div>
<div class="a" style="left:1363px;top:289px;width:286px;height:20px;background:#4f4f4f"></div>
<div class="a" style="left:1363px;top:309px;width:286px;height:1px;background:#2f2f2f"></div>
<div class="a" style="left:1383px;top:289px;width:1px;height:20px;background:#2f2f2f"></div>
<div class="a" style="left:1404px;top:289px;width:1px;height:20px;background:#2f2f2f"></div>
<div class="a" style="left:1405px;top:289px;width:5px;height:20px;background:#e8641e"></div>
<div class="a" style="left:1410px;top:289px;width:1px;height:20px;background:#2f2f2f"></div>
<div class="a" style="left:1614px;top:289px;width:1px;height:20px;background:#2f2f2f"></div>
<svg class="a" style="left:1388px;top:293px" width="12" height="13"><path d="M3 6V4a3 3 0 0 1 6 0v2" fill="none" stroke="#aaa" stroke-width="1.5"/><rect x="1.5" y="6" width="9" height="6" fill="#aaa"/><rect x="5" y="8" width="2" height="2" fill="#444"/></svg>
<svg class="a" style="left:1415px;top:294px" width="8" height="10"><path d="M1 1v8l6-4z" fill="#ddd"/></svg>
<div class="a" style="left:1432px;top:291px;width:18px;height:18px;background:#fff;border:1px solid #000"></div>
<div class="a" style="left:1434px;top:292px;width:1px;height:15px;background:#c8a070"></div><div class="a" style="left:1446px;top:292px;width:1px;height:15px;background:#c8a070"></div><div class="a" style="left:1435px;top:292px;width:11px;height:2px;background:#665"></div>
<div class="t ln" style="left:1455px;top:295px">Vorlage Vorderseite</div>
<div class="a" style="left:1619px;top:294px;width:10px;height:10px;border-radius:50%;border:1px solid #bbb"></div>
<div class="a" style="left:1363px;top:310px;width:286px;height:20px;background:#4f4f4f"></div>
<div class="a" style="left:1363px;top:330px;width:286px;height:1px;background:#2f2f2f"></div>
<div class="a" style="left:1383px;top:310px;width:1px;height:20px;background:#2f2f2f"></div>
<div class="a" style="left:1404px;top:310px;width:1px;height:20px;background:#2f2f2f"></div>
<div class="a" style="left:1405px;top:310px;width:5px;height:20px;background:#e8641e"></div>
<div class="a" style="left:1410px;top:310px;width:1px;height:20px;background:#2f2f2f"></div>
<div class="a" style="left:1614px;top:310px;width:1px;height:20px;background:#2f2f2f"></div>
<svg class="a" style="left:1388px;top:314px" width="12" height="13"><path d="M3 6V4a3 3 0 0 1 6 0v2" fill="none" stroke="#aaa" stroke-width="1.5"/><rect x="1.5" y="6" width="9" height="6" fill="#aaa"/><rect x="5" y="8" width="2" height="2" fill="#444"/></svg>
<svg class="a" style="left:1415px;top:315px" width="8" height="10"><path d="M1 1v8l6-4z" fill="#ddd"/></svg>
<div class="a" style="left:1432px;top:312px;width:18px;height:18px;background:#fff;border:1px solid #000"></div>
<div class="a" style="left:1434px;top:313px;width:1px;height:15px;background:#c8a070"></div><div class="a" style="left:1446px;top:313px;width:1px;height:15px;background:#c8a070"></div><div class="a" style="left:1435px;top:313px;width:11px;height:2px;background:#665"></div>
<div class="t ln" style="left:1455px;top:316px">Vorlage Rückseite</div>
<div class="a" style="left:1619px;top:315px;width:10px;height:10px;border-radius:50%;border:1px solid #bbb"></div>
<svg class="a" style="left:1640px;top:101px" width="8" height="8"><path d="M0 0h8v8z" fill="#ddd"/></svg>
<div class="t" style="left:1362px;top:1024px;font-size:10px;color:#ddd">4 Ebenen</div>
<svg class="a" style="left:1508px;top:1021px" width="125" height="16" fill="none" stroke="#c8c8c8" stroke-width="1.2">
<circle cx="11" cy="6" r="4"/><path d="M8 9l-5 5" stroke-width="1.6"/>
<rect x="30.5" y="3.5" width="7" height="7" fill="#777"/><rect x="33.5" y="6.5" width="7" height="7"/>
<path d="M55 4h3l2 2M55 4v3M60 4h8v9h-4v-4h-4z" fill="#c8c8c8"/>
<path d="M84 6h9v8h-6v-3h-3z" fill="#c8c8c8"/>
<path d="M108 4h10M111 2h4M109 5l1 10h6l1-10M111 7v6M113 7v6M115 7v6"/>
</svg>
<!-- RIGHT PANELS -->
<div class="a" style="left:1658px;top:65px;width:262px;height:12px;background:#333"></div>
<div class="a" style="left:1658px;top:77px;width:262px;height:962px;background:#474747"></div>


<!-- TOOLBAR CONTENT -->
<svg class="a" style="left:5px;top:66px" width="14" height="10"><path d="M5 2v6L1 5zM10 2v6L6 5z" fill="#bbb"/></svg>
<div class="a" style="left:25px;top:79px;width:20px;height:4px;background:repeating-linear-gradient(90deg,#1e1e1e 0 1px,#474747 1px 2px)"></div>
<div class="a" style="left:7px;top:94px;width:28px;height:22px;background:#2f2f2f;border:1px solid #3a3a3a"></div>
<svg class="a" style="left:0;top:85px" width="71" height="490" fill="none" stroke="#c6c6c6" stroke-width="1.2">
<!-- row1 -->
<path d="M15.5 10 V25 L19 21.5 L22 28 L24.5 27 L21.5 20.5 L26 20.5 Z" fill="#2f2f2f" stroke="#e0e0e0" stroke-width="1.2"/>
<path d="M47 10 V25 L50.5 21.5 L53.5 28 L56 27 L53 20.5 L57.5 20.5 Z" fill="#c4c4c4" stroke="#c4c4c4" stroke-width="1"/>
<path d="M61 31h4v-4z" fill="#d0d0d0" stroke="none"/>
<path d="M18 42l9 9" stroke="#c8c8c8" stroke-width="2.5"/><path d="M15 38l1.5 3M11 40l3 1M19 36l-1 3M13 35l2 2.5M21 40l-3 1" stroke="#e0e0e0" stroke-width="1.2"/><circle cx="16.5" cy="40" r="2" fill="#e8e8e8" stroke="none"/>
<path d="M52 48c-6 0-10-3-10-7s5-7 10-7 9 3 9 6" fill="none" stroke="#c8c8c8" stroke-width="2"/><path d="M50 40l10 6-4 1 2 5-2 1-2-5-3 3z" fill="#d8d8d8" stroke="none"/><path d="M45 46c-2 1-2 4 0 5" stroke="#c8c8c8" stroke-width="1.5" fill="none"/>
<path d="M4 56.5h63" stroke="#3a3a3a" stroke-width="1"/><path d="M4 57.5h63" stroke="#575757" stroke-width="1"/>
<path d="M13 78l2-8 8-8 5 5-8 8z" fill="#b0b0b0" stroke="#d8d8d8" stroke-width="1"/><path d="M13 78l6-6" stroke="#333" stroke-width="1"/><path d="M23 62l3-3 5 5-3 3" fill="#d8d8d8" stroke="none"/>
<path d="M44 62.5h14M51 62v15M47 77.5h8M44.5 62v3M57.5 62v3" stroke="#d0d0d0" stroke-width="1.8" fill="none"/>
<path d="M29 81h4v-4z" fill="#d0d0d0" stroke="none"/><path d="M61 81h4v-4z" fill="#d0d0d0" stroke="none"/>
<path d="M12.5 101.5l15-15" stroke="#d0d0d0" stroke-width="1.4"/>
<rect x="44.5" y="87.5" width="14" height="12" fill="#777" stroke="#d0d0d0" stroke-width="1.2"/>
<path d="M29 106h4v-4z" fill="#d0d0d0" stroke="none"/><path d="M61 106h4v-4z" fill="#d0d0d0" stroke="none"/>
<path d="M20 119l8-8 1.5 1.5-8 8z" fill="#c8c8c8" stroke="none"/><path d="M12 126c2 0 3-1 4-3s3-4 5-3 1 3-1 5-5 2-8 1z" fill="#b8b8b8" stroke="none"/>
<path d="M45 126l2-6 10-10 4 4-10 10z" fill="#a8a8a8" stroke="#d0d0d0" stroke-width="1"/><path d="M45 126l2-6 4 4z" fill="#e0e0e0" stroke="none"/>
<path d="M29 130h4v-4z" fill="#d0d0d0" stroke="none"/><path d="M61 130h4v-4z" fill="#d0d0d0" stroke="none"/>
<path d="M11 141h10l5 4v8H11z" fill="#a8a8a8" stroke="#d0d0d0" stroke-width="1"/><path d="M15 144c3-1 5-4 8-7l5-3" stroke="#333" stroke-width="2.5" fill="none"/><path d="M23 137l5-3 1 2" stroke="#d0d0d0" stroke-width="1.2" fill="none"/>
<path d="M44 150l9-11h10l-9 11z" fill="#b8b8b8" stroke="#d0d0d0" stroke-width="1"/><path d="M44 150v4h10l9-11v-4l-9 11z" fill="#888" stroke="#d0d0d0" stroke-width="1"/>
<path d="M29 154h4v-4z" fill="#d0d0d0" stroke="none"/><path d="M61 154h4v-4z" fill="#d0d0d0" stroke="none"/>
<path d="M4 154.5h63" stroke="#3a3a3a" stroke-width="1"/><path d="M4 155.5h63" stroke="#575757" stroke-width="1"/>
<path d="M14 162a7 7 0 1 1 -1 8" fill="none" stroke="#c8c8c8" stroke-width="1.6" stroke-dasharray="2.2 1.6"/><path d="M11 158l3 4-5 1z" fill="#d0d0d0" stroke="none"/>
<rect x="44.5" y="168.5" width="9" height="9" fill="none" stroke="#d0d0d0" stroke-width="1.2"/><rect x="48.5" y="160.5" width="12" height="11" fill="#666" stroke="#d0d0d0" stroke-width="1.2"/><path d="M51 170l7-7M54 163h4v4" stroke="#e8e8e8" stroke-width="1.2" fill="none"/>
<path d="M29 181h4v-4z" fill="#d0d0d0" stroke="none"/><path d="M61 181h4v-4z" fill="#d0d0d0" stroke="none"/>
<path d="M12 199c0-5 3-9 7-9 3 0 4 3 7 2 2-1 2-3 2-3 0 4-2 8-6 8-3 0-3-2-6-1-2 1-2 3-4 3z" fill="#b0b0b0" stroke="#d0d0d0" stroke-width="1"/><circle cx="14" cy="203" r="2.2" fill="none" stroke="#e0e0e0" stroke-width="1.2"/><circle cx="18" cy="196" r="2" fill="#333" stroke="#e0e0e0" stroke-width="1"/><path d="M21 185c1 3 3 4 5 3" stroke="#d0d0d0" fill="none"/>
<rect x="47.5" y="187.5" width="12" height="11" fill="none" stroke="#d0d0d0" stroke-width="1.2" stroke-dasharray="2 1.5"/><path d="M43 184v12l3-3 2 4 2-1-2-4h4z" fill="#d0d0d0" stroke="none"/>
<path d="M29 205h4v-4z" fill="#d0d0d0" stroke="none"/><path d="M61 205h4v-4z" fill="#d0d0d0" stroke="none"/>
<circle cx="17" cy="215" r="5.5" fill="#888" stroke="#d0d0d0" stroke-width="1.2"/><circle cx="22" cy="214" r="5.5" fill="none" stroke="#d0d0d0" stroke-width="1.2"/><path d="M14 215h9" stroke="#eee" stroke-dasharray="1.5 1"/><path d="M22 214v11l3-2 2 4 2-1-2-4h4z" fill="#e0e0e0" stroke="none"/>
<path d="M44 224V207l5 2v15zM50 224v-14l4 2v12zM55 224v-11l4 2v9z" fill="#a8a8a8" stroke="#d0d0d0" stroke-width="0.8"/><path d="M44 224.5h15" stroke="#d0d0d0" stroke-width="1.2"/>
<path d="M29 229h4v-4z" fill="#d0d0d0" stroke="none"/><path d="M61 229h4v-4z" fill="#d0d0d0" stroke="none"/>
<path d="M4 228.5h63" stroke="#3a3a3a" stroke-width="1"/><path d="M4 229.5h63" stroke="#575757" stroke-width="1"/>
<rect x="13.5" y="235.5" width="15" height="12" fill="#6a6a6a" stroke="#d0d0d0" stroke-width="1.2"/><path d="M14 243c4-4 9 1 14-4M19 236c-2 4 2 7 0 11M23 236c1 3-1 7 1 11" stroke="#d0d0d0" fill="none"/>
<rect x="44.5" y="235.5" width="15" height="12" fill="url(#tg)" stroke="#d0d0d0" stroke-width="1.2"/>
<path d="M13 276l9-9 3 3-9 9-3 0z" fill="#888" stroke="#d0d0d0" stroke-width="1"/><path d="M22 264l4-4 3 3-4 4z" fill="#d0d0d0" stroke="none"/><path d="M20 265l6 6" stroke="#d0d0d0" stroke-width="1.6"/>
<rect x="43.5" y="258.5" width="8" height="8" fill="#888" stroke="#d0d0d0" stroke-width="1"/><rect x="47.5" y="262.5" width="8" height="8" fill="#777" stroke="#d0d0d0" stroke-width="1"/><circle cx="56" cy="271" r="5" fill="#666" stroke="#d0d0d0" stroke-width="1.2"/>
<path d="M29 280h4v-4z" fill="#d0d0d0" stroke="none"/><path d="M61 280h4v-4z" fill="#d0d0d0" stroke="none"/>
<path d="M4 279.5h63" stroke="#3a3a3a" stroke-width="1"/><path d="M4 280.5h63" stroke="#575757" stroke-width="1"/>
<rect x="16.5" y="287.5" width="10" height="12" rx="1" fill="#888" stroke="#d0d0d0" stroke-width="1.2"/><circle cx="21.5" cy="293.5" r="2.5" fill="#333" stroke="#e0e0e0"/><rect x="19" y="284" width="5" height="3" fill="#d0d0d0"/><path d="M12 284h1M14 284h1M12 286h1M14 282h1M16 282h1" stroke="#d0d0d0"/>
<path d="M44.5 299.5h15M45 299V285" stroke="#d0d0d0" stroke-width="1" fill="none"/><rect x="47" y="290" width="2.5" height="9" fill="#d0d0d0"/><rect x="51" y="286" width="2.5" height="13" fill="#d0d0d0"/><rect x="55" y="292" width="2.5" height="7" fill="#d0d0d0"/>
<path d="M29 305h4v-4z" fill="#d0d0d0" stroke="none"/><path d="M61 305h4v-4z" fill="#d0d0d0" stroke="none"/>
<path d="M4 304.5h63" stroke="#3a3a3a" stroke-width="1"/><path d="M4 305.5h63" stroke="#575757" stroke-width="1"/>
<rect x="14.5" y="312.5" width="11" height="9" fill="#777" stroke="#d0d0d0" stroke-width="1"/><path d="M11 312.5h2M11 321.5h2M27 312.5h2M27 321.5h2M14.5 309v2M25.5 309v2M14.5 323v2M25.5 323v2" stroke="#d0d0d0" stroke-width="1.2"/>
<path d="M44 325l7-7 8-5-5 8z" fill="#b0b0b0" stroke="#d0d0d0" stroke-width="1"/>
<path d="M61 329h4v-4z" fill="#d0d0d0" stroke="none"/>
<path d="M13 344c-1-3-2-6 0-6s2 3 3 4v-8c0-2 2-2 2 0v6-8c0-2 2-2 2 0v8-7c0-2 2-2 2 0v7-5c0-2 2-2 2 0v8c0 4-2 7-6 7h-2c-2 0-4-2-5-4z" fill="#b8b8b8" stroke="#d8d8d8" stroke-width="0.8"/>
<circle cx="49.5" cy="336.5" r="5.5" fill="#777" stroke="#d0d0d0" stroke-width="1.6"/><path d="M53.5 340.5l5 5" stroke="#d0d0d0" stroke-width="3"/>
<path d="M29 350h4v-4z" fill="#d0d0d0" stroke="none"/><path d="M61 350h4v-4z" fill="#d0d0d0" stroke="none"/>
<path d="M4 354.5h63" stroke="#3a3a3a" stroke-width="1"/><path d="M4 355.5h63" stroke="#575757" stroke-width="1"/>
<defs><linearGradient id="tg"><stop offset="0" stop-color="#ddd"/><stop offset="1" stop-color="#444"/></linearGradient></defs>
</svg>
<!-- fill/stroke -->
<div class="a" style="left:25px;top:462px;width:34px;height:34px;background:#fff;border:1px solid #333"></div>
<div class="a" style="left:33px;top:470px;width:18px;height:18px;background:#474747;border:1px solid #333"></div>
<div class="a" style="left:7px;top:444px;width:34px;height:34px;background:#fff;border:1px solid #333"></div>
<svg class="a" style="left:7px;top:444px" width="70" height="60"><path d="M1 33L33 1" stroke="#d0102a" stroke-width="2"/><path d="M46 6c5 0 7 2 7 7M44 6l3-2v4zM53 15l-2-3h4z" stroke="#ccc" fill="#ccc" stroke-width="1"/><rect x="1.5" y="39.5" width="6" height="6" fill="#333" stroke="#ccc"/><rect x="4.5" y="42.5" width="6" height="6" fill="#fff" stroke="#222"/></svg>
<div class="a" style="left:8px;top:505px;width:59px;height:18px;background:#333;border:1px solid #2a2a2a"></div>
<div class="a" style="left:10px;top:507px;width:14px;height:14px;background:#fff;border:1px solid #222"></div>
<div class="a" style="left:30px;top:507px;width:14px;height:14px;background:linear-gradient(90deg,#fff,#222);border:1px solid #222"></div>
<div class="a" style="left:50px;top:507px;width:14px;height:14px;background:#fff;border:1px solid #222"></div>
<svg class="a" style="left:50px;top:507px" width="14" height="14"><path d="M1 13L13 1" stroke="#d0102a" stroke-width="2"/></svg>
<div class="a" style="left:8px;top:529px;width:59px;height:17px;background:#5a5a5a;border:1px solid #2a2a2a"></div>
<svg class="a" style="left:8px;top:529px" width="60" height="17" fill="none" stroke="#bbb"><circle cx="9" cy="9" r="4" fill="#444"/><rect x="9.5" y="8.5" width="5" height="5" fill="#777"/><circle cx="29" cy="8" r="4"/><rect x="28.5" y="9.5" width="6" height="5" fill="#777"/><circle cx="48" cy="8" r="4" fill="#777"/><path d="M48 8h4v4"/><path d="M19.5 1v15M39.5 1v15" stroke="#333"/></svg>
<svg class="a" style="left:24px;top:554px" width="24" height="18" fill="#555" stroke="#bbb"><rect x="6.5" y="1.5" width="15" height="10"/><rect x="1.5" y="5.5" width="15" height="10"/></svg>
<!-- DOC TAB TEXT -->
<div class="t" style="left:83px;top:69px;font-size:11.5px;color:#e2e2e2;font-weight:bold;letter-spacing:-0.2px;transform:scaleX(0.985);transform-origin:0 0">55x85mm_portrait_2s.ai* bei 300 % (CMYK/Vorschau)</div>
<div class="t" style="left:373px;top:68px;font-size:12px;color:#ccc">×</div>


<!-- FLOATING PANEL -->
<div class="a" style="left:134px;top:752px;width:232px;height:242px;background:#474747;border:1px solid #262626;box-shadow:2px 3px 6px rgba(0,0,0,0.35)"></div>
<div class="a" style="left:135px;top:753px;width:230px;height:13px;background:#2e2e2e"></div>
<svg class="a" style="left:334px;top:754px" width="30" height="11"><path d="M5 2v7L1 5.5zM10 2v7L6 5.5z" fill="#bbb"/><path d="M19 2l6 6M25 2l-6 6" stroke="#ccc" stroke-width="1.5"/></svg>
<div class="a" style="left:135px;top:766px;width:230px;height:17px;background:#333"></div>
<div class="a" style="left:135px;top:766px;width:91px;height:17px;background:#474747"></div>
<div class="a" style="left:226px;top:766px;width:64px;height:17px;background:#3b3b3b"></div>
<div class="t pt" style="left:140px;top:769px"><span style="font-size:9px;position:relative;top:-1px">⇕</span>Transformieren</div>
<div class="t pt" style="left:232px;top:769px;color:#999;font-weight:bold">Ausrichten</div>
<svg class="a" style="left:345px;top:769px" width="16" height="11" fill="#ccc"><path d="M0 3h5l-2.5 3z"/><rect x="6" y="1" width="9" height="1.3"/><rect x="6" y="3.6" width="9" height="1.3"/><rect x="6" y="6.2" width="9" height="1.3"/><rect x="6" y="8.8" width="9" height="1.3"/></svg>
<svg class="a" style="left:140px;top:802px" width="20" height="20" fill="none" stroke="#cfcfcf">
<rect x="0.5" y="0.5" width="4" height="4"/><rect x="7.5" y="0.5" width="4" height="4" fill="#cfcfcf"/><rect x="14.5" y="0.5" width="4" height="4"/>
<rect x="0.5" y="7.5" width="4" height="4"/><rect x="7.5" y="7.5" width="4" height="4"/><rect x="14.5" y="7.5" width="4" height="4"/>
<rect x="0.5" y="14.5" width="4" height="4"/><rect x="7.5" y="14.5" width="4" height="4"/><rect x="14.5" y="14.5" width="4" height="4"/>
</svg>
<div class="t pl" style="left:173px;top:795px">x:</div>
<div class="a pinp" style="left:188px;top:791px;width:56px"></div>
<div class="t ci" style="left:191px;top:795px">27,37 mm</div>
<div class="t pl" style="left:251px;top:795px">B:</div>
<div class="a pinp" style="left:267px;top:791px;width:56px"></div>
<div class="t ci" style="left:270px;top:795px">37 mm</div>
<div class="t pl" style="left:173px;top:821px">y:</div>
<div class="a pinp" style="left:188px;top:817px;width:56px"></div>
<div class="t ci" style="left:191px;top:821px">17,051 mm</div>
<div class="t pl" style="left:251px;top:821px">H:</div>
<div class="a pinp" style="left:267px;top:817px;width:56px"></div>
<div class="t ci" style="left:270px;top:821px">0 mm</div>
<svg class="a" style="left:331px;top:803px" width="18" height="18" fill="none" stroke="#ccc" stroke-width="1.4"><rect x="6" y="3" width="6" height="12" rx="3"/><path d="M9 7v4"/><path d="M2 6l2 1M2 12l2-1M16 6l-2 1M16 12l-2-1M1 9h3M14 9h3" stroke-width="1"/></svg>
<svg class="a" style="left:167px;top:845px" width="16" height="12" fill="none" stroke="#ccc"><path d="M1 11h12M1 11l8-9M6 11c0-3-1-4-3-5"/></svg>
<div class="a pinp" style="left:188px;top:843px;width:39px"></div>
<div class="t ci" style="left:191px;top:847px">0°</div>
<div class="a ddb" style="left:226px;top:843px;height:18px"></div>
<svg class="a" style="left:248px;top:845px" width="16" height="12" fill="none" stroke="#ccc"><path d="M1 11h9l5-10H6z"/></svg>
<div class="a pinp" style="left:268px;top:843px;width:39px"></div>
<div class="t ci" style="left:271px;top:847px">0°</div>
<div class="a ddb" style="left:306px;top:843px;height:18px"></div>
<div class="a" style="left:135px;top:866px;width:230px;height:1px;background:#262626"></div>
<div class="a" style="left:135px;top:867px;width:230px;height:20px;background:#333"></div>
<div class="a" style="left:135px;top:867px;width:64px;height:20px;background:#474747"></div>
<div class="t pt" style="left:142px;top:873px">Pathfinder</div>
<svg class="a" style="left:345px;top:872px" width="16" height="11" fill="#ccc"><path d="M0 3h5l-2.5 3z"/><rect x="6" y="1" width="9" height="1.3"/><rect x="6" y="3.6" width="9" height="1.3"/><rect x="6" y="6.2" width="9" height="1.3"/><rect x="6" y="8.8" width="9" height="1.3"/></svg>
<div class="t pl" style="left:140px;top:895px">Formmodi:</div>
<svg class="a" style="left:140px;top:914px" width="130" height="20" fill="none" stroke="#bbb">
<rect x="5.5" y="4.5" width="9" height="9" fill="#888"/><rect x="9.5" y="8.5" width="9" height="9" fill="#888"/>
<rect x="37.5" y="4.5" width="9" height="9" fill="#777"/><rect x="41.5" y="8.5" width="9" height="9" fill="#474747" stroke="#777"/>
<rect x="70.5" y="4.5" width="9" height="9"/><rect x="74.5" y="8.5" width="9" height="9"/><rect x="74.5" y="8.5" width="5" height="5" fill="#bbb"/>
<rect x="103.5" y="4.5" width="9" height="9" fill="#888"/><rect x="107.5" y="8.5" width="9" height="9" fill="#888"/><rect x="107.5" y="8.5" width="5" height="5" fill="#474747"/>
</svg>
<div class="a" style="left:271px;top:916px;width:88px;height:18px;border:1px solid #3a3a3a;background:#4c4c4c"></div>
<div class="t" style="left:288px;top:920px;font-size:10px;color:#7a7a7a">Umwandeln</div>
<div class="t pl" style="left:140px;top:945px">Pathfinder:</div>
<svg class="a" style="left:140px;top:964px" width="215" height="22" fill="none" stroke="#bbb">
<rect x="9.5" y="4.5" width="8" height="8"/><rect x="13.5" y="8.5" width="8" height="8"/>
<rect x="46.5" y="4.5" width="8" height="8" fill="#aaa"/><rect x="50.5" y="8.5" width="8" height="8" fill="#aaa"/>
<rect x="83.5" y="4.5" width="8" height="8" fill="#aaa"/><rect x="87.5" y="8.5" width="8" height="8" fill="#aaa"/>
<rect x="121.5" y="6.5" width="10" height="8" fill="#666" stroke="#555"/>
<rect x="158.5" y="4.5" width="8" height="8"/><rect x="162.5" y="8.5" width="8" height="8"/>
<rect x="195.5" y="4.5" width="8" height="8" stroke="#777"/><rect x="199.5" y="8.5" width="8" height="8" fill="#aaa"/>
</svg>
<!-- STATUS BAR CONTENT -->
<svg class="a" style="left:80px;top:1025px" width="60" height="14" fill="none" stroke="#bbb"><rect x="0.5" y="0.5" width="20" height="12" fill="#5a5a5a"/><circle cx="7" cy="6.5" r="3" fill="#222" stroke="#ccc"/><path d="M12 5h6l-2-2M18 8h-6l2 2"/><rect x="30.5" y="3.5" width="10" height="9"/><path d="M35 8l7-6M38 2h4v4"/></svg>
<div class="a" style="left:136px;top:1025px;width:42px;height:14px;background:#b0b0b0;border:1px solid #2a2a2a"></div>
<div class="t ci" style="left:138px;top:1028px">300%</div>
<div class="a ddb" style="left:177px;top:1025px;height:14px"></div>
<svg class="a" style="left:200px;top:1026px" width="140" height="13" fill="#c8c8c8"><rect x="1" y="2" width="2" height="9"/><path d="M11 2v9L4 6.5z"/><path d="M27 2v9L20 6.5z"/><path d="M103 2v9l7-4.5z" fill="#666"/><path d="M117 2v9l7-4.5z" fill="#666"/><rect x="125" y="2" width="2" height="9" fill="#666"/></svg>
<div class="a" style="left:236px;top:1025px;width:42px;height:14px;background:#b0b0b0;border:1px solid #2a2a2a"></div>
<div class="t ci" style="left:238px;top:1028px">2</div>
<div class="a ddb" style="left:277px;top:1025px;height:14px"></div>
<div class="a" style="left:335px;top:1024px;width:1px;height:15px;background:#383838"></div>
<div class="t" style="left:416px;top:1027px;font-size:10px;color:#ddd">Auswahl</div>
<div class="a" style="left:534px;top:1024px;width:1px;height:15px;background:#383838"></div>
<svg class="a" style="left:536px;top:1025px" width="30" height="14" fill="#c8c8c8"><path d="M4 3v8l5-4z"/><path d="M29 3v8l-5-4z"/></svg>
<div class="a" style="left:943px;top:1024px;width:15px;height:15px;background:#777"></div>
<svg class="a" style="left:1322px;top:1025px" width="14" height="14" fill="#c8c8c8"><path d="M4 3v8l5-4z"/></svg>
<svg class="a" style="left:1338px;top:86px" width="16" height="14" fill="#dcdcdc"><path d="M3 10h10L8 4z"/></svg>
<svg class="a" style="left:1338px;top:1006px" width="16" height="14" fill="#dcdcdc"><path d="M3 4h10L8 10z"/></svg>
<div class="a" style="left:1339px;top:547px;width:15px;height:15px;background:#9a9a9a;border:1px solid #2a2a2a"></div>

<svg class="a" style="left:1903px;top:68px" width="12" height="8" fill="#bbb"><path d="M1 1v6l4-3zM6 1v6l4-3z"/></svg>
<div class="a" style="left:1658px;top:77px;width:262px;height:16px;background:#333"></div>
<div class="a" style="left:1658px;top:77px;width:64px;height:16px;background:#474747"></div>
<svg class="a" style="left:1662px;top:80px" width="8" height="11" fill="none" stroke="#ccc" stroke-width="1.2"><path d="M1 4l3-3 3 3M1 7l3 3 3-3"/></svg>
<div class="t pt" style="left:1672px;top:80px;color:#e6e6e6">Farbhilfe</div>
<div class="a" style="left:1722px;top:77px;width:40px;height:16px;background:#3b3b3b"></div>
<div class="t pt" style="left:1727px;top:80px;color:#999">Kuler</div>
<svg class="a" style="left:1897px;top:80px" width="16" height="11" fill="#ccc"><path d="M0 3h5l-2.5 3z"/><rect x="6" y="1" width="9" height="1.3"/><rect x="6" y="3.6" width="9" height="1.3"/><rect x="6" y="6.2" width="9" height="1.3"/><rect x="6" y="8.8" width="9" height="1.3"/></svg>
<div class="a" style="left:1663px;top:102px;width:21px;height:21px;background:#fff;border:1px solid #111"></div><div class="a" style="left:1666px;top:105px;width:15px;height:15px;border:2px solid #111;background:#fff"></div>
<div class="a" style="left:1690px;top:102px;width:208px;height:22px;background:#e0e0e0;border:1px solid #333"></div>
<div class="a" style="left:1897px;top:102px;width:15px;height:22px;background:#3e3e3e;border:1px solid #2a2a2a"></div><svg class="a" style="left:1900px;top:110px" width="10" height="6"><path d="M1 0h8l-4 5z" fill="#ccc"/></svg>
<div class="a" style="left:1693px;top:104px;width:82px;height:18px;border:1px solid #111;background:linear-gradient(90deg,#fff 0 16px,#b3a7a5 16px 32px,#b9b5a9 32px 48px,#d3e2cd 48px 64px,#9595bd 64px)"></div><div class="a" style="left:1695px;top:106px;width:14px;height:14px;border:1px solid #111"></div>
<div class="t pt" style="left:1681px;top:132px;color:#ddd">Schattierungen</div>
<svg class="a" style="left:1784px;top:136px" width="8" height="5"><path d="M0 0h8l-4 4z" fill="#ccc"/></svg>
<div class="t pt" style="left:1848px;top:132px;color:#ddd">Farbtöne</div>
<div class="a" style="left:1663px;top:150px;width:251px;height:76px;background:#111"></div>
<div class="a" style="left:1664px;top:151px;width:25px;height:14px;background:#1d1d1d"></div>
<div class="a" style="left:1902px;top:151px;width:11px;height:14px;background:#3a3a3a"></div>
<div class="a" style="left:1689px;top:151px;width:1px;height:14px;background:#3a3a3a"></div>
<div class="a" style="left:1690px;top:151px;width:26px;height:14px;background:#6c6c6c"></div>
<div class="a" style="left:1717px;top:151px;width:25px;height:14px;background:#a2a2a2"></div>
<div class="a" style="left:1743px;top:151px;width:26px;height:14px;background:#d6d6d6"></div>
<div class="a" style="left:1770px;top:151px;width:25px;height:14px;background:#fff"></div>
<div class="a" style="left:1796px;top:151px;width:26px;height:14px;background:#fff"></div>
<div class="a" style="left:1823px;top:151px;width:25px;height:14px;background:#fff"></div>
<div class="a" style="left:1849px;top:151px;width:26px;height:14px;background:#fff"></div>
<div class="a" style="left:1876px;top:151px;width:25px;height:14px;background:#fff"></div>
<div class="a" style="left:1664px;top:166px;width:25px;height:14px;background:#1d1d1d"></div>
<div class="a" style="left:1902px;top:166px;width:11px;height:14px;background:#3a3a3a"></div>
<div class="a" style="left:1689px;top:166px;width:1px;height:14px;background:#3a3a3a"></div>
<div class="a" style="left:1690px;top:166px;width:26px;height:14px;background:#5e5e5e"></div>
<div class="a" style="left:1717px;top:166px;width:25px;height:14px;background:#8a8484"></div>
<div class="a" style="left:1743px;top:166px;width:26px;height:14px;background:#a09896"></div>
<div class="a" style="left:1770px;top:166px;width:25px;height:14px;background:#b8a4a2"></div>
<div class="a" style="left:1796px;top:166px;width:26px;height:14px;background:#c2b0ae"></div>
<div class="a" style="left:1823px;top:166px;width:25px;height:14px;background:#cdbfbb"></div>
<div class="a" style="left:1849px;top:166px;width:26px;height:14px;background:#e0d6d2"></div>
<div class="a" style="left:1876px;top:166px;width:25px;height:14px;background:#efebe9"></div>
<div class="a" style="left:1664px;top:181px;width:25px;height:14px;background:#1d1d1d"></div>
<div class="a" style="left:1902px;top:181px;width:11px;height:14px;background:#3a3a3a"></div>
<div class="a" style="left:1689px;top:181px;width:1px;height:14px;background:#3a3a3a"></div>
<div class="a" style="left:1690px;top:181px;width:26px;height:14px;background:#606060"></div>
<div class="a" style="left:1717px;top:181px;width:25px;height:14px;background:#8c8a86"></div>
<div class="a" style="left:1743px;top:181px;width:26px;height:14px;background:#a8a29c"></div>
<div class="a" style="left:1770px;top:181px;width:25px;height:14px;background:#b8b0a6"></div>
<div class="a" style="left:1796px;top:181px;width:26px;height:14px;background:#c4beb0"></div>
<div class="a" style="left:1823px;top:181px;width:25px;height:14px;background:#d2ccc0"></div>
<div class="a" style="left:1849px;top:181px;width:26px;height:14px;background:#e0ddd4"></div>
<div class="a" style="left:1876px;top:181px;width:25px;height:14px;background:#efede9"></div>
<div class="a" style="left:1664px;top:196px;width:25px;height:14px;background:#1d1d1d"></div>
<div class="a" style="left:1902px;top:196px;width:11px;height:14px;background:#3a3a3a"></div>
<div class="a" style="left:1689px;top:196px;width:1px;height:14px;background:#3a3a3a"></div>
<div class="a" style="left:1690px;top:196px;width:26px;height:14px;background:#606462"></div>
<div class="a" style="left:1717px;top:196px;width:25px;height:14px;background:#8e9a94"></div>
<div class="a" style="left:1743px;top:196px;width:26px;height:14px;background:#a8c0b0"></div>
<div class="a" style="left:1770px;top:196px;width:25px;height:14px;background:#c6e0c6"></div>
<div class="a" style="left:1796px;top:196px;width:26px;height:14px;background:#d6e8d6"></div>
<div class="a" style="left:1823px;top:196px;width:25px;height:14px;background:#e2eee2"></div>
<div class="a" style="left:1849px;top:196px;width:26px;height:14px;background:#eef4ee"></div>
<div class="a" style="left:1876px;top:196px;width:25px;height:14px;background:#f8faf8"></div>
<div class="a" style="left:1664px;top:211px;width:25px;height:14px;background:#1d1d1d"></div>
<div class="a" style="left:1902px;top:211px;width:11px;height:14px;background:#3a3a3a"></div>
<div class="a" style="left:1689px;top:211px;width:1px;height:14px;background:#3a3a3a"></div>
<div class="a" style="left:1690px;top:211px;width:26px;height:14px;background:#5a5a5e"></div>
<div class="a" style="left:1717px;top:211px;width:25px;height:14px;background:#7c7a88"></div>
<div class="a" style="left:1743px;top:211px;width:26px;height:14px;background:#8c8aa6"></div>
<div class="a" style="left:1770px;top:211px;width:25px;height:14px;background:#9492be"></div>
<div class="a" style="left:1796px;top:211px;width:26px;height:14px;background:#a4a2c8"></div>
<div class="a" style="left:1823px;top:211px;width:25px;height:14px;background:#bcbad4"></div>
<div class="a" style="left:1849px;top:211px;width:26px;height:14px;background:#d2d0e2"></div>
<div class="a" style="left:1876px;top:211px;width:25px;height:14px;background:#e8e8ee"></div>
<svg class="a" style="left:1667px;top:229px" width="20" height="13"><rect x="0.5" y="0.5" width="13" height="9" fill="#888" stroke="#ccc"/><path d="M5 1v9M9 1v9M1 5h13" stroke="#444"/><path d="M15 9h4l-2 3z" fill="#ccc"/></svg>
<div class="t pl" style="left:1695px;top:229px">Ohne</div>
<svg class="a" style="left:1852px;top:228px" width="50" height="14"><circle cx="7" cy="7" r="6" fill="#666" stroke="#bbb"/><circle cx="7" cy="7" r="2" fill="#ddd"/><rect x="29" y="2" width="13" height="9" fill="#aaa" stroke="#ddd"/><path d="M34 2v9M38 2v9" stroke="#666"/><path d="M23 8h6M26 5v6" stroke="#eee" stroke-width="2"/></svg>
<svg class="a" style="left:1902px;top:232px" width="10" height="10" fill="#777"><rect x="8" y="0" width="1" height="1"/><rect x="6" y="2" width="1" height="1"/><rect x="8" y="2" width="1" height="1"/><rect x="4" y="4" width="1" height="1"/><rect x="6" y="4" width="1" height="1"/><rect x="8" y="4" width="1" height="1"/><rect x="2" y="6" width="1" height="1"/><rect x="4" y="6" width="1" height="1"/><rect x="6" y="6" width="1" height="1"/><rect x="8" y="6" width="1" height="1"/></svg>
<div class="a" style="left:1658px;top:245px;width:262px;height:2px;background:#262626"></div>
<div class="a" style="left:1658px;top:248px;width:262px;height:17px;background:#333"></div>
<div class="a" style="left:1658px;top:248px;width:55px;height:17px;background:#474747"></div>
<svg class="a" style="left:1662px;top:251px" width="8" height="11" fill="none" stroke="#ccc" stroke-width="1.2"><path d="M1 4l3-3 3 3M1 7l3 3 3-3"/></svg>
<div class="t pt" style="left:1672px;top:251px;color:#e6e6e6">Verlauf</div>
<svg class="a" style="left:1897px;top:251px" width="16" height="11" fill="#ccc"><path d="M0 3h5l-2.5 3z"/><rect x="6" y="1" width="9" height="1.3"/><rect x="6" y="3.6" width="9" height="1.3"/><rect x="6" y="6.2" width="9" height="1.3"/><rect x="6" y="8.8" width="9" height="1.3"/></svg>
<div class="a" style="left:1664px;top:272px;width:30px;height:30px;background:linear-gradient(90deg,#fff,#222);border:1px solid #222"></div>
<svg class="a" style="left:1697px;top:285px" width="8" height="5"><path d="M0 0h8l-4 4z" fill="#ccc"/></svg>
<div class="t pl" style="left:1731px;top:276px;color:#ddd">Art:</div>
<div class="a" style="left:1752px;top:273px;width:160px;height:18px;background:#474747;border:1px solid #2e2e2e;box-shadow:inset 0 0 0 1px #555"></div><div class="a" style="left:1893px;top:274px;width:1px;height:16px;background:#333"></div><svg class="a" style="left:1898px;top:279px" width="10" height="6"><path d="M1 0h8l-4 5z" fill="#ccc"/></svg>
<svg class="a" style="left:1664px;top:307px" width="30" height="32"><rect x="9.5" y="12.5" width="18" height="18" fill="#fff" stroke="#222"/><rect x="14.5" y="17.5" width="8" height="8" fill="#474747" stroke="#222"/><rect x="0.5" y="0.5" width="18" height="18" fill="#fff" stroke="#222"/><path d="M1 18L18 1" stroke="#d0102a" stroke-width="2"/></svg>
<svg class="a" style="left:1670px;top:345px" width="20" height="16" fill="none" stroke="#777"><rect x="1.5" y="1.5" width="8" height="5"/><rect x="5.5" y="9.5" width="12" height="5"/><path d="M12 3h6l-3 3z" fill="#777"/></svg>
<div class="t pl" style="left:1713px;top:302px;color:#7c7c7c">Kontur:</div>
<div class="a" style="left:1752px;top:299px;width:68px;height:18px;border:1px solid #3a3a3a;background:linear-gradient(90deg,#474747 0 22px,#3a3a3a 22px 23px,#474747 23px 45px,#3a3a3a 45px 46px,#474747 46px)"></div>
<svg class="a" style="left:1752px;top:299px" width="68" height="18" fill="none" stroke="#6a6a6a"><path d="M6 15V5h11M9 15V8h8"/><path d="M29 15V5h11M32 15V8h8M40 5l-4 4"/><path d="M52 15V5h11M55 15V8h8"/></svg>
<svg class="a" style="left:1732px;top:327px" width="14" height="12" fill="none" stroke="#777"><path d="M1 11h11M1 11l8-9"/></svg>
<div class="a" style="left:1752px;top:325px;width:67px;height:18px;background:#555;border:1px solid #3a3a3a"></div><div class="a" style="left:1800px;top:326px;width:18px;height:16px;background:#4a4a4a;border-left:1px solid #3a3a3a"></div><svg class="a" style="left:1805px;top:331px" width="10" height="6"><path d="M1 0h8l-4 5z" fill="#888"/></svg>
<svg class="a" style="left:1731px;top:352px" width="16" height="16" fill="none" stroke="#777"><path d="M4 1v14M1 4l3-3 3 3M1 12l3 3 3-3"/><rect x="8.5" y="4.5" width="6" height="7" rx="2"/></svg>
<div class="a" style="left:1752px;top:351px;width:67px;height:18px;background:#555;border:1px solid #3a3a3a"></div><div class="a" style="left:1800px;top:352px;width:18px;height:16px;background:#4a4a4a;border-left:1px solid #3a3a3a"></div><svg class="a" style="left:1805px;top:357px" width="10" height="6"><path d="M1 0h8l-4 5z" fill="#888"/></svg>
<div class="a" style="left:1668px;top:385px;width:216px;height:18px;background:linear-gradient(90deg,#fff,#000);border:1px solid #222"></div>
<svg class="a" style="left:1896px;top:389px" width="12" height="14" fill="none" stroke="#6a6a6a"><path d="M1 3h10M4 1h4M2 4l1 9h6l1-9M5 6v6M7 6v6"/></svg>
<div class="t pl" style="left:1702px;top:434px;color:#7c7c7c">Deckkraft:</div>
<div class="a" style="left:1752px;top:430px;width:67px;height:18px;background:#555;border:1px solid #3a3a3a"></div><div class="a" style="left:1800px;top:431px;width:18px;height:16px;background:#4a4a4a;border-left:1px solid #3a3a3a"></div><svg class="a" style="left:1805px;top:436px" width="10" height="6"><path d="M1 0h8l-4 5z" fill="#888"/></svg>
<div class="t pl" style="left:1709px;top:460px;color:#7c7c7c">Position:</div>
<div class="a" style="left:1752px;top:456px;width:67px;height:18px;background:#555;border:1px solid #3a3a3a"></div><div class="a" style="left:1800px;top:457px;width:18px;height:16px;background:#4a4a4a;border-left:1px solid #3a3a3a"></div><svg class="a" style="left:1805px;top:462px" width="10" height="6"><path d="M1 0h8l-4 5z" fill="#888"/></svg>
<div class="a" style="left:1658px;top:483px;width:262px;height:2px;background:#262626"></div>
<div class="a" style="left:1658px;top:485px;width:262px;height:16px;background:#333"></div>
<div class="a" style="left:1658px;top:485px;width:63px;height:16px;background:#474747"></div>
<div class="t pt" style="left:1663px;top:488px;color:#e6e6e6">Farbfelder</div>
<svg class="a" style="left:1897px;top:488px" width="16" height="11" fill="#ccc"><path d="M0 3h5l-2.5 3z"/><rect x="6" y="1" width="9" height="1.3"/><rect x="6" y="3.6" width="9" height="1.3"/><rect x="6" y="6.2" width="9" height="1.3"/><rect x="6" y="8.8" width="9" height="1.3"/></svg>
<svg class="a" style="left:1664px;top:508px" width="30" height="32"><rect x="9.5" y="12.5" width="18" height="18" fill="#fff" stroke="#222"/><rect x="14.5" y="17.5" width="8" height="8" fill="#474747" stroke="#222"/><rect x="0.5" y="0.5" width="18" height="18" fill="#fff" stroke="#222"/><path d="M1 18L18 1" stroke="#d0102a" stroke-width="2"/></svg>
<div class="a" style="left:1863px;top:508px;width:50px;height:22px;background:#333;border:1px solid #2a2a2a"></div><div class="a" style="left:1864px;top:509px;width:24px;height:20px;background:#5a5a5a"></div>
<svg class="a" style="left:1863px;top:508px" width="50" height="22" fill="#ddd"><rect x="7" y="5" width="11" height="2"/><rect x="7" y="9" width="11" height="2"/><rect x="7" y="13" width="11" height="2"/><rect x="7" y="17" width="11" height="1.5"/><g><rect x="31" y="5" width="3" height="3"/><rect x="35" y="5" width="3" height="3"/><rect x="39" y="5" width="3" height="3"/><rect x="31" y="9" width="3" height="3"/><rect x="35" y="9" width="3" height="3"/><rect x="39" y="9" width="3" height="3"/><rect x="31" y="13" width="3" height="3"/><rect x="35" y="13" width="3" height="3"/><rect x="39" y="13" width="3" height="3"/></g></svg>
<div class="a" style="left:1663px;top:541px;width:251px;height:128px;background:#474747;border:1px solid #2e2e2e"></div>
<div class="a" style="left:1900px;top:542px;width:13px;height:126px;background:#3d3d3d"></div><svg class="a" style="left:1901px;top:545px" width="11" height="120" fill="#777"><path d="M1 7h9L5.5 2z"/><path d="M1 113h9L5.5 118z"/></svg>
<div class="a" style="left:1664px;top:542px;width:224px;height:56px;background:#555"></div>
<div class="a" style="left:1664px;top:598px;width:84px;height:15px;background:#555"></div>
<div class="a" style="left:1665px;top:543px;width:13px;height:13px;background:#fff"></div><svg class="a" style="left:1665px;top:543px" width="13" height="13"><rect x="1.5" y="1.5" width="10" height="10" fill="#fff" stroke="#222"/><path d="M2 11L11 2" stroke="#d0102a" stroke-width="1.8"/></svg>
<div class="a" style="left:1679px;top:543px;width:13px;height:13px;background:#eee"></div><svg class="a" style="left:1679px;top:543px" width="13" height="13" fill="none" stroke="#222"><circle cx="6.5" cy="6.5" r="4.5"/><circle cx="6.5" cy="6.5" r="1"/><path d="M6.5 0v13M0 6.5h13"/></svg>
<div class="a" style="left:1693px;top:543px;width:13px;height:13px;background:#ffffff"></div>
<div class="a" style="left:1707px;top:543px;width:13px;height:13px;background:#000000"></div>
<div class="a" style="left:1721px;top:543px;width:13px;height:13px;background:#e3051b"></div>
<div class="a" style="left:1735px;top:543px;width:13px;height:13px;background:#ffed00"></div>
<div class="a" style="left:1749px;top:543px;width:13px;height:13px;background:#009640"></div>
<div class="a" style="left:1763px;top:543px;width:13px;height:13px;background:#009fe3"></div>
<div class="a" style="left:1777px;top:543px;width:13px;height:13px;background:#312783"></div>
<div class="a" style="left:1791px;top:543px;width:13px;height:13px;background:#e6007e"></div>
<div class="a" style="left:1805px;top:543px;width:13px;height:13px;background:#be1622"></div>
<div class="a" style="left:1819px;top:543px;width:13px;height:13px;background:#e94e1b"></div>
<div class="a" style="left:1833px;top:543px;width:13px;height:13px;background:#e5661e"></div>
<div class="a" style="left:1847px;top:543px;width:13px;height:13px;background:#f39200"></div>
<div class="a" style="left:1861px;top:543px;width:13px;height:13px;background:#f8b133"></div>
<div class="a" style="left:1875px;top:543px;width:13px;height:13px;background:#ffed00"></div>
<div class="a" style="left:1665px;top:557px;width:13px;height:13px;background:#dedc00"></div>
<div class="a" style="left:1679px;top:557px;width:13px;height:13px;background:#95c11f"></div>
<div class="a" style="left:1693px;top:557px;width:13px;height:13px;background:#3aaa35"></div>
<div class="a" style="left:1707px;top:557px;width:13px;height:13px;background:#2d9a3a"></div>
<div class="a" style="left:1721px;top:557px;width:13px;height:13px;background:#1d7a35"></div>
<div class="a" style="left:1735px;top:557px;width:13px;height:13px;background:#55b06e"></div>
<div class="a" style="left:1749px;top:557px;width:13px;height:13px;background:#2aa198"></div>
<div class="a" style="left:1763px;top:557px;width:13px;height:13px;background:#4fb3e8"></div>
<div class="a" style="left:1777px;top:557px;width:13px;height:13px;background:#2d74b9"></div>
<div class="a" style="left:1791px;top:557px;width:13px;height:13px;background:#253a8e"></div>
<div class="a" style="left:1805px;top:557px;width:13px;height:13px;background:#29235c"></div>
<div class="a" style="left:1819px;top:557px;width:13px;height:13px;background:#662483"></div>
<div class="a" style="left:1833px;top:557px;width:13px;height:13px;background:#951b81"></div>
<div class="a" style="left:1847px;top:557px;width:13px;height:13px;background:#a2195b"></div>
<div class="a" style="left:1861px;top:557px;width:13px;height:13px;background:#d4006e"></div>
<div class="a" style="left:1875px;top:557px;width:13px;height:13px;background:#e2007a"></div>
<div class="a" style="left:1665px;top:571px;width:13px;height:13px;background:#c9b68c"></div>
<div class="a" style="left:1679px;top:571px;width:13px;height:13px;background:#9d8c78"></div>
<div class="a" style="left:1693px;top:571px;width:13px;height:13px;background:#7c6e5e"></div>
<div class="a" style="left:1707px;top:571px;width:13px;height:13px;background:#67584b"></div>
<div class="a" style="left:1721px;top:571px;width:13px;height:13px;background:#c49d65"></div>
<div class="a" style="left:1735px;top:571px;width:13px;height:13px;background:#a87d52"></div>
<div class="a" style="left:1749px;top:571px;width:13px;height:13px;background:#8e643c"></div>
<div class="a" style="left:1763px;top:571px;width:13px;height:13px;background:#7a512d"></div>
<div class="a" style="left:1777px;top:571px;width:13px;height:13px;background:#6b4626"></div>
<div class="a" style="left:1791px;top:571px;width:13px;height:13px;background:#4f3620"></div>
<div class="a" style="left:1805px;top:571px;width:13px;height:13px;background:linear-gradient(90deg,#fff,#000)"></div>
<div class="a" style="left:1819px;top:571px;width:13px;height:13px;background:#000000"></div>
<div class="a" style="left:1833px;top:571px;width:13px;height:13px;background:radial-gradient(#fff,#000 70%)"></div>
<div class="a" style="left:1847px;top:571px;width:13px;height:13px;background:#000000"></div>
<div class="a" style="left:1861px;top:571px;width:13px;height:13px;background:linear-gradient(90deg,#8a5020,#f8d0a0,#8a5020)"></div>
<div class="a" style="left:1875px;top:571px;width:13px;height:13px;background:radial-gradient(#f0c080,#603010 70%)"></div>
<div class="a" style="left:1665px;top:585px;width:13px;height:13px;background:radial-gradient(circle at 40% 40%,#f07030,#c01830)"></div>
<div class="a" style="left:1679px;top:585px;width:13px;height:13px;background:#e67317"></div><svg class="a" style="left:1679px;top:585px" width="13" height="13"><path d="M4 13L13 4V13z" fill="#fff"/><path d="M4 13L13 4" stroke="#000" stroke-width="1.2"/><rect x="9" y="9" width="2" height="2" fill="#000"/></svg>
<div class="a" style="left:1693px;top:585px;width:13px;height:13px;background:#a8a8a8"></div><svg class="a" style="left:1693px;top:585px" width="13" height="13"><path d="M4 13L13 4V13z" fill="#fff"/><path d="M4 13L13 4" stroke="#000" stroke-width="1.2"/><rect x="9" y="9" width="2" height="2" fill="#000"/></svg>
<div class="a" style="left:1707px;top:585px;width:13px;height:13px;background:#3c3c3c"></div><svg class="a" style="left:1707px;top:585px" width="13" height="13"><path d="M4 13L13 4V13z" fill="#fff"/><path d="M4 13L13 4" stroke="#000" stroke-width="1.2"/><rect x="9" y="9" width="2" height="2" fill="#000"/></svg>
<div class="a" style="left:1721px;top:585px;width:13px;height:13px;background:#a8a8a8"></div><svg class="a" style="left:1721px;top:585px" width="13" height="13"><path d="M4 13L13 4V13z" fill="#fff"/><path d="M4 13L13 4" stroke="#000" stroke-width="1.2"/><rect x="9" y="9" width="2" height="2" fill="#000"/></svg>
<div class="a" style="left:1735px;top:585px;width:13px;height:13px;background:#000000"></div>
<div class="a" style="left:1749px;top:585px;width:13px;height:13px;background:#3a3a3a"></div>
<div class="a" style="left:1763px;top:585px;width:13px;height:13px;background:#5c5c5c"></div>
<div class="a" style="left:1777px;top:585px;width:13px;height:13px;background:#6e6e6e"></div>
<div class="a" style="left:1791px;top:585px;width:13px;height:13px;background:#7f7f7f"></div>
<div class="a" style="left:1805px;top:585px;width:13px;height:13px;background:#939393"></div>
<div class="a" style="left:1819px;top:585px;width:13px;height:13px;background:#a6a6a6"></div>
<div class="a" style="left:1833px;top:585px;width:13px;height:13px;background:#bcbcbc"></div>
<div class="a" style="left:1847px;top:585px;width:13px;height:13px;background:#d3d3d3"></div>
<div class="a" style="left:1861px;top:585px;width:13px;height:13px;background:#e6e6e6"></div>
<div class="a" style="left:1875px;top:585px;width:13px;height:13px;background:#f5f5f5"></div>
<div class="a" style="left:1665px;top:599px;width:13px;height:13px;background:#e3051b"></div>
<div class="a" style="left:1679px;top:599px;width:13px;height:13px;background:#e8641e"></div>
<div class="a" style="left:1693px;top:599px;width:13px;height:13px;background:#ffd500"></div>
<div class="a" style="left:1707px;top:599px;width:13px;height:13px;background:#3aa035"></div>
<div class="a" style="left:1721px;top:599px;width:13px;height:13px;background:#253f9c"></div>
<div class="a" style="left:1735px;top:599px;width:13px;height:13px;background:#7c3a96"></div>
<svg class="a" style="left:1660px;top:672px" width="250" height="16" fill="none" stroke="#bbb" stroke-width="1.2"><path d="M4 2v11M7 2v11M10 2l3 11M14 11h3l-1.5 2z"/><circle cx="42" cy="5" r="2"/><circle cx="42" cy="11" r="2"/><path d="M36 8l4-3M36 8l4 3"/><rect x="116.5" y="3.5" width="10" height="9" fill="#888"/><path d="M121 3v9M116 8h10" stroke="#333"/><path d="M127 11h3l-1.5 2z" fill="#ccc"/><rect x="143.5" y="3.5" width="9" height="10" stroke="#666"/><path d="M146 6h4M146 9h4" stroke="#666"/><path d="M167 5h4l1 1h7v8h-12z" fill="#bbb"/><path d="M196 5h9v9h-6v-3h-3z" fill="#777" stroke="#777"/><path d="M219 4h10M222 2h4M220 5l1 9h6l1-9" stroke="#666"/></svg>
<div class="a" style="left:1658px;top:689px;width:262px;height:2px;background:#262626"></div>
<div class="a" style="left:1658px;top:691px;width:262px;height:17px;background:#333"></div>
<div class="a" style="left:1658px;top:691px;width:46px;height:17px;background:#474747"></div>
<svg class="a" style="left:1662px;top:694px" width="8" height="11" fill="none" stroke="#ccc" stroke-width="1.2"><path d="M1 4l3-3 3 3M1 7l3 3 3-3"/></svg>
<div class="t pt" style="left:1672px;top:694px;color:#e6e6e6">Farbe</div>
<svg class="a" style="left:1897px;top:694px" width="16" height="11" fill="#ccc"><path d="M0 3h5l-2.5 3z"/><rect x="6" y="1" width="9" height="1.3"/><rect x="6" y="3.6" width="9" height="1.3"/><rect x="6" y="6.2" width="9" height="1.3"/><rect x="6" y="8.8" width="9" height="1.3"/></svg>
<svg class="a" style="left:1664px;top:714px" width="30" height="14"><rect x="0.5" y="0.5" width="8" height="8" fill="#fff" stroke="#222"/><rect x="3.5" y="3.5" width="8" height="8" fill="#333" stroke="#ccc"/><path d="M19 2c4 0 5 2 5 5M18 2l3-2v4zM24 9l-2-3h4z" stroke="#ccc" fill="#ccc"/></svg>
<svg class="a" style="left:1664px;top:733px" width="30" height="32"><rect x="9.5" y="12.5" width="18" height="18" fill="#fff" stroke="#222"/><rect x="14.5" y="17.5" width="8" height="8" fill="#474747" stroke="#222"/><rect x="0.5" y="0.5" width="18" height="18" fill="#fff" stroke="#222"/><path d="M1 18L18 1" stroke="#d0102a" stroke-width="2"/></svg>
<div class="t pt" style="left:1709px;top:721px;color:#ccc">C</div>
<div class="a" style="left:1728px;top:723px;width:103px;height:6px;background:#3c3c3c;border:1px solid #2a2a2a;box-shadow:0 1px 0 #555"></div>
<div class="a" style="left:1837px;top:717px;width:34px;height:18px;background:#a9a9a9;border:1px solid #2e2e2e"></div>
<div class="t pt" style="left:1873px;top:721px;color:#ccc">%</div>
<div class="t pt" style="left:1709px;top:746px;color:#ccc">M</div>
<div class="a" style="left:1728px;top:748px;width:103px;height:6px;background:#3c3c3c;border:1px solid #2a2a2a;box-shadow:0 1px 0 #555"></div>
<div class="a" style="left:1837px;top:742px;width:34px;height:18px;background:#a9a9a9;border:1px solid #2e2e2e"></div>
<div class="t pt" style="left:1873px;top:746px;color:#ccc">%</div>
<div class="t pt" style="left:1709px;top:771px;color:#ccc">Y</div>
<div class="a" style="left:1728px;top:773px;width:103px;height:6px;background:#3c3c3c;border:1px solid #2a2a2a;box-shadow:0 1px 0 #555"></div>
<div class="a" style="left:1837px;top:767px;width:34px;height:18px;background:#a9a9a9;border:1px solid #2e2e2e"></div>
<div class="t pt" style="left:1873px;top:771px;color:#ccc">%</div>
<div class="t pt" style="left:1709px;top:796px;color:#ccc">K</div>
<div class="a" style="left:1728px;top:798px;width:103px;height:6px;background:#3c3c3c;border:1px solid #2a2a2a;box-shadow:0 1px 0 #555"></div>
<div class="a" style="left:1837px;top:792px;width:34px;height:18px;background:#a9a9a9;border:1px solid #2e2e2e"></div>
<div class="t pt" style="left:1873px;top:796px;color:#ccc">%</div>
<svg class="a" style="left:1668px;top:800px" width="36" height="16"><path d="M6 3v9M2 7l4-4 4 4" stroke="#ccc" stroke-width="1.6" fill="none"/><path d="M3 12h7" stroke="#ccc" stroke-width="1.5"/><rect x="19.5" y="0.5" width="14" height="14" fill="#fff" stroke="#222"/></svg>
<svg class="a" style="left:1664px;top:822px" width="40" height="15"><rect x="0.5" y="0.5" width="13" height="13" fill="#fff" stroke="#222"/><path d="M1 13L13 1" stroke="#d0102a" stroke-width="1.6"/><rect x="13" y="0" width="13" height="14" fill="#000"/><rect x="26.5" y="0.5" width="12" height="13" fill="#fff" stroke="#222"/></svg>
<div class="a" style="left:1664px;top:846px;width:238px;height:22px;border:1px solid #222;background:linear-gradient(#ffffff 0%,rgba(255,255,255,0) 45%,rgba(0,0,0,0) 58%,#000 100%),linear-gradient(90deg,#e0001a 0%,#f07020 10%,#f8e000 17%,#80c020 35%,#20a860 47%,#30b8e8 54%,#2040a8 64%,#5030a0 74%,#c02890 86%,#e80050 95%,#e0001a 100%)"></div>
<div class="a" style="left:1658px;top:876px;width:262px;height:2px;background:#262626"></div>
<div class="a" style="left:1658px;top:879px;width:262px;height:16px;background:#333"></div>
<div class="a" style="left:1658px;top:879px;width:57px;height:16px;background:#474747"></div>
<div class="t pt" style="left:1663px;top:882px;color:#e6e6e6">Aussehen</div>
<svg class="a" style="left:1897px;top:882px" width="16" height="11" fill="#ccc"><path d="M0 3h5l-2.5 3z"/><rect x="6" y="1" width="9" height="1.3"/><rect x="6" y="3.6" width="9" height="1.3"/><rect x="6" y="6.2" width="9" height="1.3"/><rect x="6" y="8.8" width="9" height="1.3"/></svg>
<div class="a" style="left:1663px;top:901px;width:251px;height:98px;background:#474747;border:1px solid #2a2a2a"></div>
<div class="a" style="left:1664px;top:902px;width:237px;height:21px;background:#474747"></div>
<div class="a" style="left:1664px;top:923px;width:237px;height:1px;background:#2c2c2c"></div>
<div class="a" style="left:1688px;top:902px;width:1px;height:21px;background:#2c2c2c"></div>
<div class="a" style="left:1664px;top:924px;width:237px;height:24px;background:#555555"></div>
<div class="a" style="left:1664px;top:948px;width:237px;height:1px;background:#2c2c2c"></div>
<div class="a" style="left:1688px;top:924px;width:1px;height:24px;background:#2c2c2c"></div>
<div class="a" style="left:1664px;top:949px;width:237px;height:24px;background:#5b6270"></div>
<div class="a" style="left:1664px;top:973px;width:237px;height:1px;background:#2c2c2c"></div>
<div class="a" style="left:1688px;top:949px;width:1px;height:24px;background:#2c2c2c"></div>
<div class="a" style="left:1664px;top:974px;width:237px;height:24px;background:#4c4c4c"></div>
<div class="a" style="left:1664px;top:998px;width:237px;height:1px;background:#2c2c2c"></div>
<div class="a" style="left:1688px;top:974px;width:1px;height:24px;background:#2c2c2c"></div>

<svg class="a" style="left:1669px;top:907px;opacity:1" width="14" height="10"><path d="M1 5C4 1 10 1 13 5C10 9 4 9 1 5Z" fill="#bdbdbd"/><circle cx="7" cy="5" r="2.5" fill="#3a3a44"/></svg>
<svg class="a" style="left:1669px;top:931px;opacity:0.3" width="14" height="10"><path d="M1 5C4 1 10 1 13 5C10 9 4 9 1 5Z" fill="#bdbdbd"/><circle cx="7" cy="5" r="2.5" fill="#3a3a44"/></svg>
<svg class="a" style="left:1669px;top:956px;opacity:1" width="14" height="10"><path d="M1 5C4 1 10 1 13 5C10 9 4 9 1 5Z" fill="#bdbdbd"/><circle cx="7" cy="5" r="2.5" fill="#3a3a44"/></svg>
<svg class="a" style="left:1669px;top:981px;opacity:0.3" width="14" height="10"><path d="M1 5C4 1 10 1 13 5C10 9 4 9 1 5Z" fill="#bdbdbd"/><circle cx="7" cy="5" r="2.5" fill="#3a3a44"/></svg>
<svg class="a" style="left:1692px;top:908px" width="10" height="8"><path d="M1 1h8l-4 6z" fill="#ddd"/></svg>
<div class="t pl" style="left:1711px;top:907px;color:#e6e6e6">Fläche:</div>
<div class="a" style="left:1789px;top:903px;width:17px;height:17px;background:#fff;border:1px solid #111"></div><svg class="a" style="left:1789px;top:903px" width="17" height="17"><path d="M4 13L13 4" stroke="#c8104a" stroke-width="2"/></svg>
<div class="t or" style="left:1731px;top:930px">Deckkraft:</div><div class="t pl" style="left:1808px;top:930px">Standard</div>
<div class="t or" style="left:1711px;top:955px">Transformieren</div><div class="t" style="left:1883px;top:954px;font-size:13px;font-style:italic;color:#bbb;font-family:'Liberation Serif',serif">fx</div>
<div class="t or" style="left:1711px;top:980px">Deckkraft:</div><div class="t pl" style="left:1788px;top:980px">Standard</div>
<div class="a" style="left:1901px;top:902px;width:12px;height:96px;background:#333"></div><div class="a" style="left:1902px;top:948px;width:10px;height:34px;background:#9a9a9a"></div><svg class="a" style="left:1901px;top:905px" width="12" height="92" fill="#ddd"><path d="M2 8h8L6 4z"/><path d="M2 84h8l-4 4z"/></svg>
<svg class="a" style="left:1666px;top:1001px" width="240" height="15" fill="none" stroke="#c8c8c8" stroke-width="1.5"><rect x="3.5" y="2.5" width="9" height="9"/><rect x="29.5" y="2.5" width="9" height="9"/><rect x="31.5" y="4.5" width="5" height="5" fill="#999" stroke="none"/><circle cx="157" cy="8" r="5"/><path d="M153.5 4.5l7 7"/><path d="M188 4h9v9h-6v-3h-3z" fill="#c8c8c8"/><path d="M213 3h10M216 1h4M214 4l1 9h6l1-9M217 6v5M219 6v5"/></svg>
<div class="t" style="left:1718px;top:1000px;font-size:13px;font-style:italic;color:#bbb;font-family:'Liberation Serif',serif">fx</div><svg class="a" style="left:1730px;top:1010px" width="6" height="4"><path d="M0 0h6l-3 3z" fill="#ccc"/></svg>
<div class="a" style="left:1658px;top:1019px;width:262px;height:2px;background:#262626"></div>
<div class="a" style="left:1658px;top:1021px;width:262px;height:18px;background:#333"></div>
<div class="a" style="left:1658px;top:1021px;width:56px;height:18px;background:#474747"></div>
<svg class="a" style="left:1662px;top:1024px" width="8" height="11" fill="none" stroke="#ccc" stroke-width="1.2"><path d="M1 4l3-3 3 3M1 7l3 3 3-3"/></svg>
<div class="t pt" style="left:1672px;top:1024px;color:#e6e6e6">Zeichen</div>
<div class="a" style="left:1714px;top:1021px;width:45px;height:18px;background:#3b3b3b"></div>
<div class="t pt" style="left:1719px;top:1024px;color:#999">Absatz</div>
<div class="a" style="left:1759px;top:1021px;width:63px;height:18px;background:#3b3b3b"></div>
<div class="t pt" style="left:1764px;top:1024px;color:#999">OpenType</div>
<svg class="a" style="left:1897px;top:1024px" width="16" height="11" fill="#ccc"><path d="M0 3h5l-2.5 3z"/><rect x="6" y="1" width="9" height="1.3"/><rect x="6" y="3.6" width="9" height="1.3"/><rect x="6" y="6.2" width="9" height="1.3"/><rect x="6" y="8.8" width="9" height="1.3"/></svg>
<!-- DIALOG -->
<div class="a" style="left:360px;top:140px;width:400px;height:620px;box-shadow:0 4px 12px 3px rgba(0,0,0,0.5);left:379px;top:151px;width:364px;height:591px;border-radius:7px 7px 5px 5px"></div>
<div class="a" style="left:379px;top:151px;width:364px;height:591px;border-radius:7px 7px 5px 5px;border:1px solid #1e2a36;background:linear-gradient(180deg,rgba(120,185,245,0.5),rgba(130,190,245,0.45) 30px,rgba(110,170,235,0.5));backdrop-filter:blur(5px);box-shadow:inset 0 0 0 1px rgba(255,255,255,0.75)"></div>
<div class="a" style="left:386px;top:180px;width:350px;height:555px;background:#4a4a4a;border:1px solid #2c3a48;box-shadow:0 0 0 1px rgba(255,255,255,0.6)"></div>
<div class="t" style="left:388px;top:160px;font-size:12px;color:#10131a">Transformieren</div>
<!-- group boxes -->
<div class="a" style="left:403px;top:211px;width:316px;height:82px;border:1px solid #2e2e2e;box-shadow:1px 1px 0 #575757, inset 1px 1px 0 #575757"></div>
<div class="a" style="left:403px;top:317px;width:316px;height:82px;border:1px solid #2e2e2e;box-shadow:1px 1px 0 #575757, inset 1px 1px 0 #575757"></div>
<div class="a" style="left:403px;top:423px;width:316px;height:68px;border:1px solid #2e2e2e;box-shadow:1px 1px 0 #575757, inset 1px 1px 0 #575757"></div>
<div class="a" style="left:403px;top:515px;width:316px;height:140px;border:1px solid #2e2e2e;box-shadow:1px 1px 0 #575757, inset 1px 1px 0 #575757"></div>
<div class="t dl" style="left:409px;top:204px;padding:0 4px;background:#4a4a4a">Skalieren</div>
<div class="t dl" style="left:409px;top:310px;padding:0 4px;background:#4a4a4a">Verschieben</div>
<div class="t dl" style="left:409px;top:416px;padding:0 4px;background:#4a4a4a">Drehen</div>
<div class="t dl" style="left:409px;top:508px;padding:0 4px;background:#4a4a4a">Optionen</div>
<div class="t dl" style="left:413px;top:233px">Horizontal:</div>
<div class="t dl" style="left:427px;top:263px">Vertikal:</div>
<div class="t dl" style="left:413px;top:339px">Horizontal:</div>
<div class="t dl" style="left:427px;top:369px">Vertikal:</div>
<div class="t dl" style="left:431px;top:453px">Winkel:</div>
<!-- sliders -->
<div class="a trk" style="top:238px"></div>
<div class="a trk" style="top:268px"></div>
<div class="a trk" style="top:344px"></div>
<div class="a trk" style="top:374px"></div>
<svg class="a" style="left:540px;top:225px" width="40" height="160">
<path d="M6.5 19.5 V13 L11.5 7.5 L16.5 13 V19.5Z" fill="#5a5a5a" stroke="#e8902c" stroke-width="1.2"/>
<path d="M6 49 V43 L11 37.5 L16 43 V49Z" fill="#5c5c5c" stroke="#2f2f2f" stroke-width="1"/>
<path d="M6 125 V119 L11 113.5 L16 119 V125Z" fill="#5c5c5c" stroke="#2f2f2f" stroke-width="1"/>
<path d="M19 155 V149 L24 143.5 L29 149 V155Z" fill="#5c5c5c" stroke="#2f2f2f" stroke-width="1"/>
</svg>
<!-- inputs -->
<div class="a" style="left:631px;top:229px;width:79px;height:20px;border:2px solid #e8902c;background:#b6b6b6;box-shadow:inset 0 0 0 1px #2e2e2e"></div>
<div class="a" style="left:636px;top:232px;width:34px;height:14px;background:#3d8fe9"></div>
<div class="t" style="left:636px;top:233px;font-size:12px;color:#fff">100%</div>
<div class="a inp" style="left:632px;top:260px;width:77px;height:18px"></div>
<div class="t" style="left:636px;top:264px;font-size:12px;color:#111">100%</div>
<div class="a inp" style="left:632px;top:336px;width:77px;height:18px"></div>
<div class="t" style="left:636px;top:340px;font-size:12px;color:#111">0 mm</div>
<div class="a inp" style="left:632px;top:366px;width:77px;height:18px"></div>
<div class="t" style="left:636px;top:370px;font-size:12px;color:#111">7 mm</div>
<div class="a" style="left:478px;top:443px;width:32px;height:32px;border-radius:50%;background:#505050;border:1px solid #2c2c2c;box-shadow:inset 1px 1px 0 #404040"></div>
<div class="a" style="left:494px;top:458px;width:15px;height:1px;background:#2a2a2a"></div>
<div class="a inp" style="left:518px;top:451px;width:57px;height:17px"></div>
<div class="t" style="left:522px;top:454px;font-size:12px;color:#111">0°</div>
<!-- checkboxes -->
<div class="a cb" style="left:413px;top:534px"></div>
<div class="a cb" style="left:413px;top:559px"></div>
<div class="a cb" style="left:413px;top:584px"></div>
<div class="a cb" style="left:511px;top:534px"></div>
<div class="a cb" style="left:511px;top:559px"></div>
<div class="a cb" style="left:511px;top:584px"></div>
<svg class="a" style="left:511px;top:530px" width="16" height="40"><path d="M3 9 L6 12.5 L13 3.5" stroke="#e4e4e4" stroke-width="1.6" fill="none"/><path d="M3 34 L6 37.5 L13 28.5" stroke="#e4e4e4" stroke-width="1.6" fill="none"/></svg>
<div class="t dl" style="left:430px;top:533px;letter-spacing:0.3px">x spiegeln</div>
<div class="t dl" style="left:430px;top:558px;letter-spacing:0.3px">y spiegeln</div>
<div class="t dl" style="left:430px;top:583px;letter-spacing:0.3px">Zufallswert</div>
<div class="t dl" style="left:528px;top:533px;letter-spacing:0.3px">Konturen und Effekte skalieren</div>
<div class="t dl" style="left:528px;top:558px;letter-spacing:0.3px">Objekte transformieren</div>
<div class="t dl" style="left:528px;top:583px;letter-spacing:0.3px">Muster transformieren</div>
<div class="a" style="left:412px;top:608px;width:298px;height:1px;background:#2e2e2e;box-shadow:0 1px 0 #565656"></div>
<svg class="a" style="left:411px;top:619px" width="21" height="21" fill="none" stroke="#d8d8d8" stroke-width="1">
<rect x="0.5" y="0.5" width="4" height="4"/><rect x="8.5" y="0.5" width="4" height="4"/><rect x="16.5" y="0.5" width="4" height="4"/>
<rect x="0.5" y="8.5" width="4" height="4"/><rect x="8.5" y="8.5" width="4" height="4" fill="#d8d8d8"/><rect x="16.5" y="8.5" width="4" height="4"/>
<rect x="0.5" y="16.5" width="4" height="4"/><rect x="8.5" y="16.5" width="4" height="4"/><rect x="16.5" y="16.5" width="4" height="4"/>
<path d="M4.5 2.5h4M12.5 2.5h4M4.5 10.5h4M12.5 10.5h4M4.5 18.5h4M12.5 18.5h4M2.5 4.5v4M2.5 12.5v4M10.5 4.5v4M10.5 12.5v4M18.5 4.5v4M18.5 12.5v4"/>
</svg>
<div class="t dl" style="left:525px;top:624px">Kopien</div>
<div class="a inp" style="left:568px;top:621px;width:57px;height:18px"></div>
<div class="t" style="left:572px;top:625px;font-size:12px;color:#111">4</div>
<div class="a cb" style="left:403px;top:684px"></div>
<div class="t dl" style="left:420px;top:683px">Vorschau</div>
<div class="a btn" style="left:531px;top:679px;width:92px;height:25px;border:2px solid #262626"></div>
<div class="t dl" style="left:568px;top:684px">OK</div>
<div class="a btn" style="left:629px;top:680px;width:90px;height:23px"></div>
<div class="t dl" style="left:643px;top:684px">Abbrechen</div>

</body></html>
